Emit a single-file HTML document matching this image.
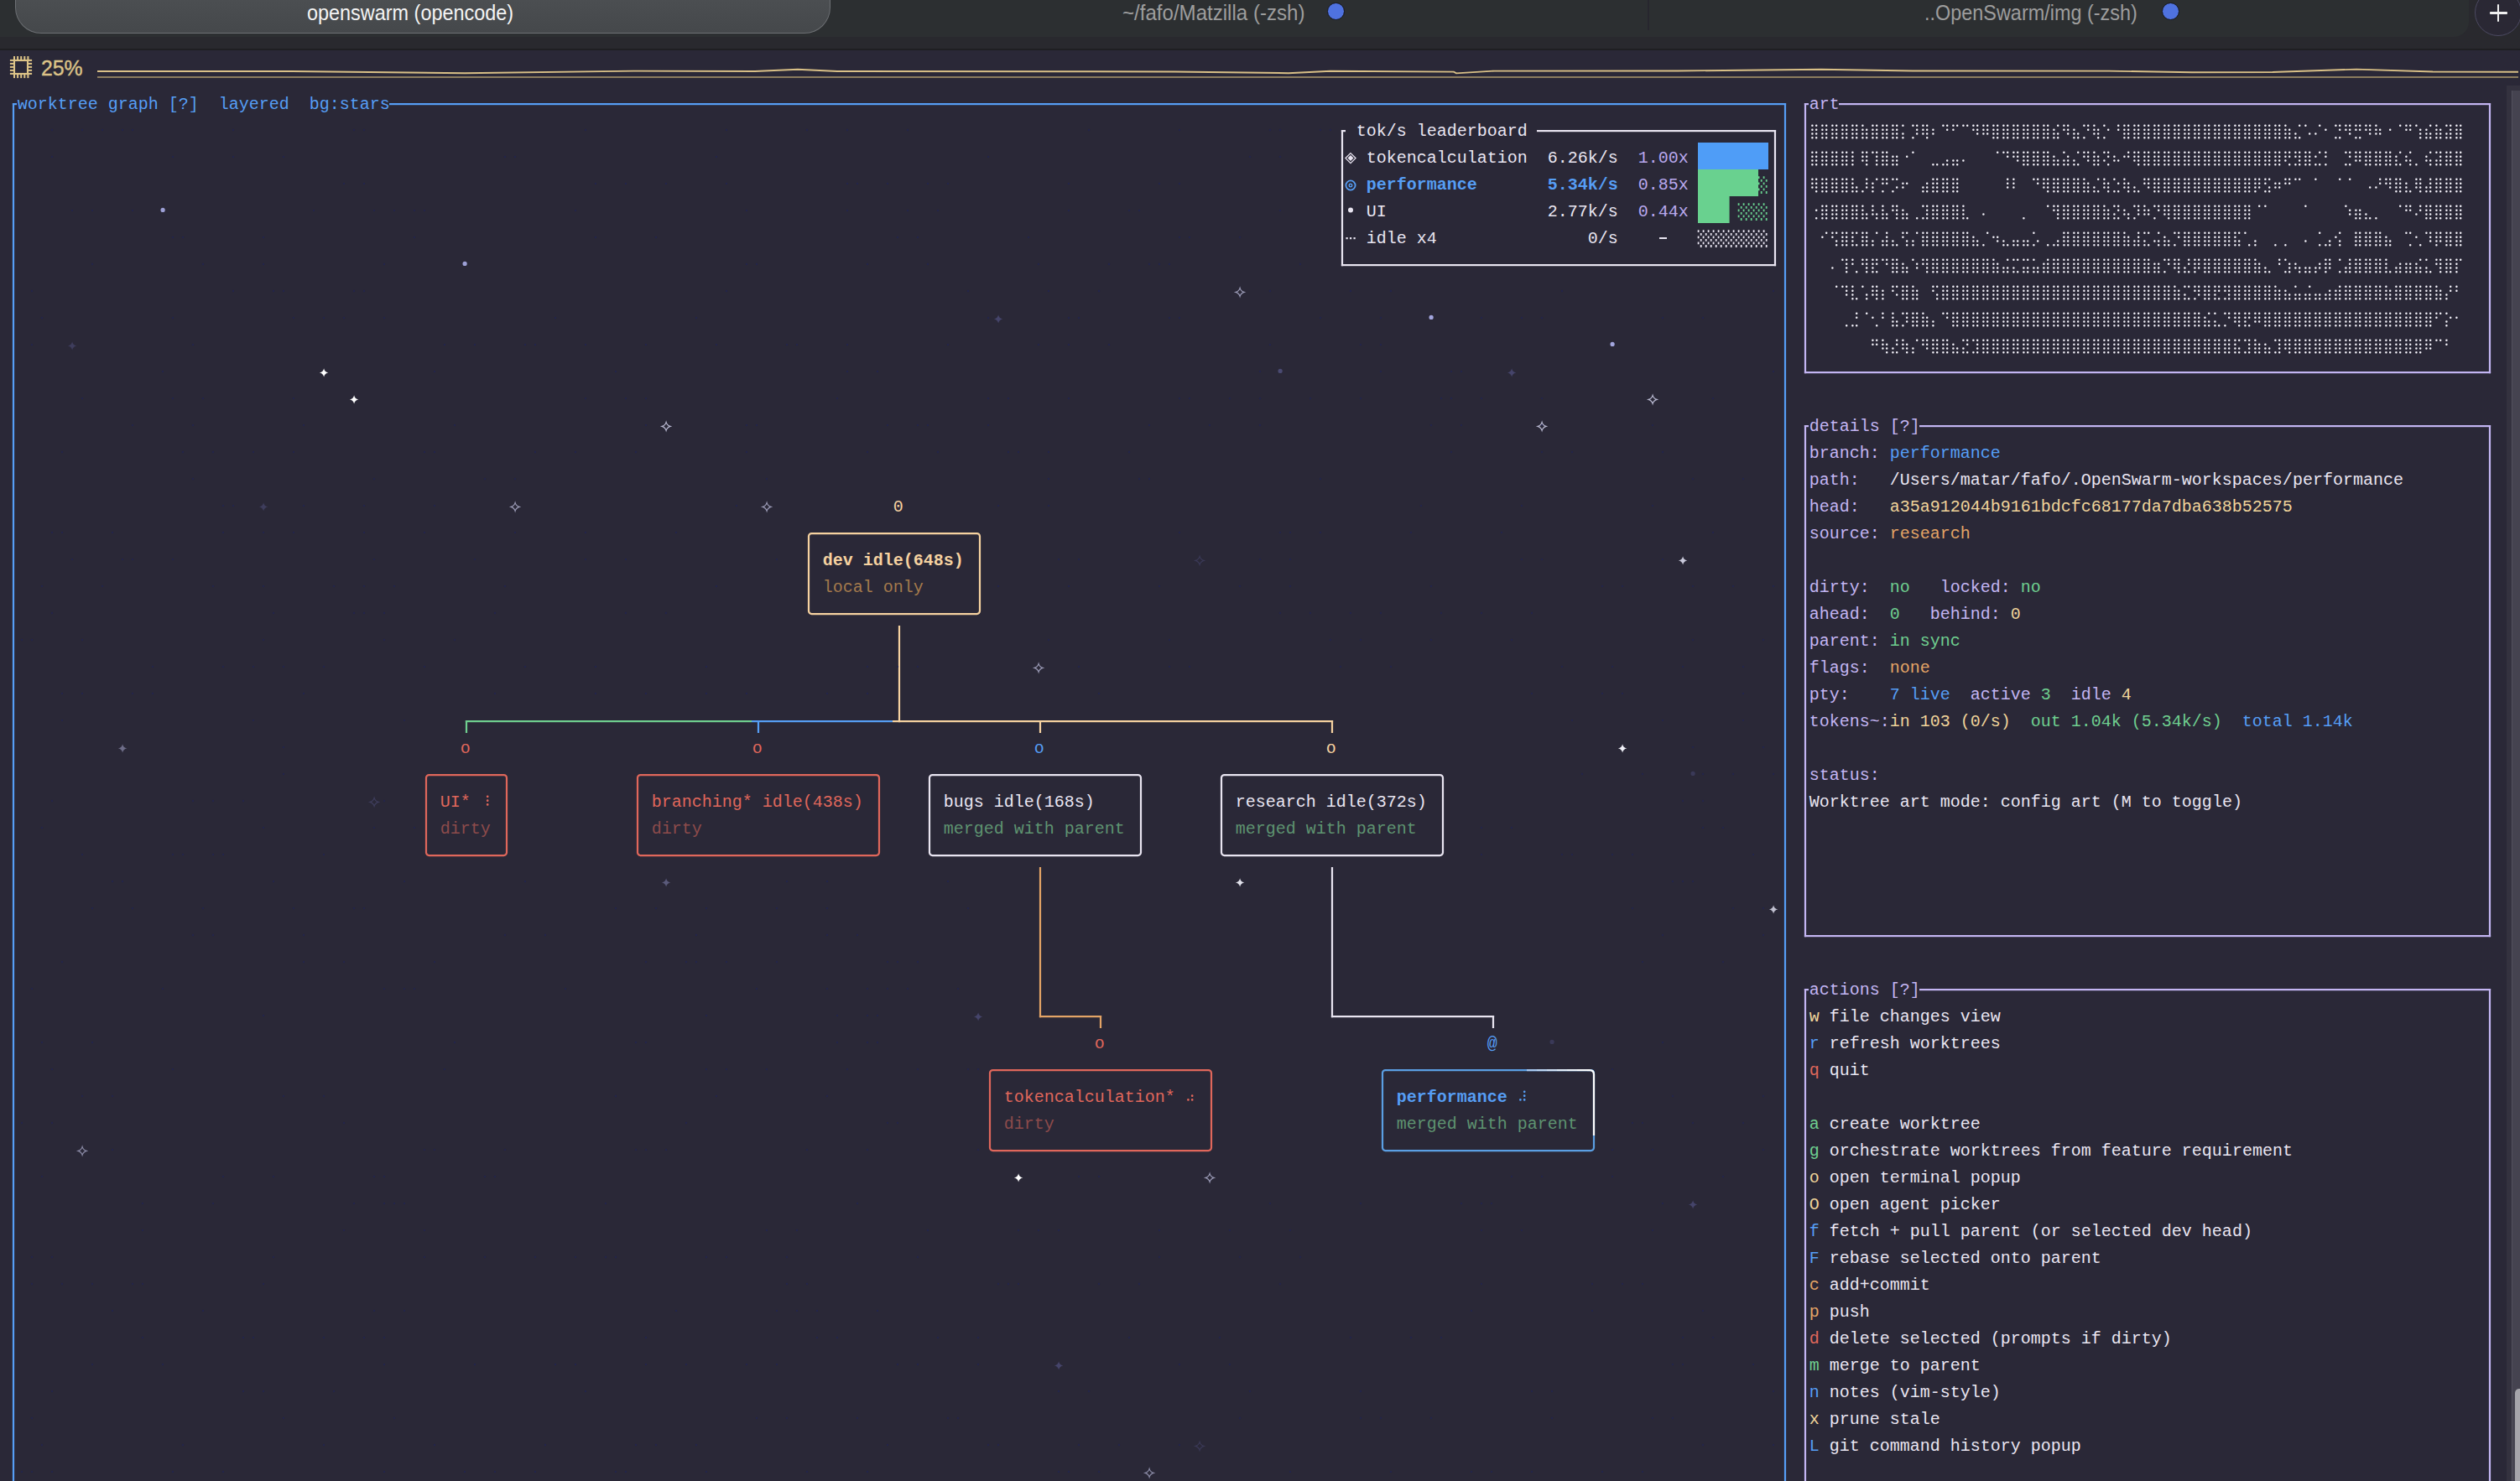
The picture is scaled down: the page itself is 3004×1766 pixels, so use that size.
<!DOCTYPE html>
<html><head><meta charset="utf-8"><style>
html,body{margin:0;padding:0}
body{width:3004px;height:1766px;overflow:hidden;position:relative;background:#2a2837;font-family:"Liberation Mono",monospace}
.t{position:absolute;white-space:pre;font-size:20px;line-height:32px;font-family:"Liberation Mono",monospace}
.tab{position:absolute;top:1.2px;height:40px;line-height:28px;font-family:"Liberation Sans",sans-serif;font-size:25px;white-space:pre;transform:scaleX(0.937);transform-origin:left}
</style></head><body>

<div style="position:absolute;left:0;top:0;width:3004px;height:58px;background:#29292e"></div>
<div style="position:absolute;left:0;top:0;width:2943px;height:43.5px;background:#2c2f31;border-radius:0 0 18px 0"></div>
<div style="position:absolute;left:0;top:58px;width:3004px;height:2px;background:#1f1f22"></div>
<div style="position:absolute;left:18px;top:-30px;width:972px;height:70px;border-radius:0 0 31px 31px;background:linear-gradient(#505356,#45484b);box-sizing:border-box;border:1.5px solid #6d7074;border-top:none"></div>
<div class="tab" style="left:366px;color:#f4f4f4">openswarm (opencode)</div>
<div style="position:absolute;left:1964px;top:0;width:2px;height:36px;background:#27262e"></div>
<div class="tab" style="left:1338px;color:#9d9d9d;transform:scaleX(0.963)">~/fafo/Matzilla (-zsh)</div>
<div style="position:absolute;left:1582px;top:3px;width:19px;height:19px;border-radius:50%;background:#4f72e0;border:1px solid #15151a"></div>
<div class="tab" style="left:2294px;color:#9d9d9d">..OpenSwarm/img (-zsh)</div>
<div style="position:absolute;left:2577px;top:3px;width:19px;height:19px;border-radius:50%;background:#4f72e0;border:1px solid #15151a"></div>
<div style="position:absolute;left:2950px;top:-13px;width:56px;height:56px;border-radius:50%;box-sizing:border-box;border:1.5px solid #4c4a62;background:#2a2834"></div>
<div style="position:absolute;left:2967.8px;top:14.4px;width:21px;height:2.2px;border-radius:1px;background:#f0f0f0"></div>
<div style="position:absolute;left:2977.2px;top:5px;width:2.2px;height:21px;border-radius:1px;background:#f0f0f0"></div>
<div style="position:absolute;left:49px;top:63.3px;font-family:'Liberation Sans',sans-serif;font-size:25px;line-height:36px;color:#dcc387;-webkit-text-stroke:0.4px #dcc387;transform:scaleX(0.99);transform-origin:left">25%</div>
<svg style="position:absolute;left:0;top:0" width="3004" height="106"><rect x="17" y="72" width="16" height="16" fill="none" stroke="#dcc387" stroke-width="2.1"/><rect x="16.0" y="67" width="2" height="4.5" fill="#dcc387"/><rect x="16.0" y="88.6" width="2" height="4.5" fill="#dcc387"/><rect x="11.9" y="70.9" width="4.5" height="2" fill="#dcc387"/><rect x="33.6" y="70.9" width="4.5" height="2" fill="#dcc387"/><rect x="20.1" y="67" width="2" height="4.5" fill="#dcc387"/><rect x="20.1" y="88.6" width="2" height="4.5" fill="#dcc387"/><rect x="11.9" y="74.9" width="4.5" height="2" fill="#dcc387"/><rect x="33.6" y="74.9" width="4.5" height="2" fill="#dcc387"/><rect x="24.2" y="67" width="2" height="4.5" fill="#dcc387"/><rect x="24.2" y="88.6" width="2" height="4.5" fill="#dcc387"/><rect x="11.9" y="78.9" width="4.5" height="2" fill="#dcc387"/><rect x="33.6" y="78.9" width="4.5" height="2" fill="#dcc387"/><rect x="28.3" y="67" width="2" height="4.5" fill="#dcc387"/><rect x="28.3" y="88.6" width="2" height="4.5" fill="#dcc387"/><rect x="11.9" y="82.9" width="4.5" height="2" fill="#dcc387"/><rect x="33.6" y="82.9" width="4.5" height="2" fill="#dcc387"/><rect x="32.4" y="67" width="2" height="4.5" fill="#dcc387"/><rect x="32.4" y="88.6" width="2" height="4.5" fill="#dcc387"/><rect x="11.9" y="86.9" width="4.5" height="2" fill="#dcc387"/><rect x="33.6" y="86.9" width="4.5" height="2" fill="#dcc387"/>
<path d="M116 85 L348 85 L554 87.2 L755 84.6 L900 85 L951 82.8 L998 85 L1300 85.2 L1400 85.5 L1536 87.2 L1586 84.8 L1733 85.6 L1736 87.4 L1781 84.6 L2000 84.5 L2171 82.8 L2280 84.5 L2514 84.6 L2613 86.3 L2709 86 L2809 82.6 L2900 85.5 L3002 85.7" fill="none" stroke="#d9c087" stroke-width="1.9"/>
<rect x="116" y="91.1" width="2886" height="1.8" fill="#968563"/>
</svg>
<div style="position:absolute;left:2988px;top:102px;width:16px;height:1664px;background:#34323f"></div>
<div style="position:absolute;left:2994px;top:108px;width:10px;height:1658px;background:#454350;border-left:1px solid #53515e;box-sizing:border-box"></div>
<div style="position:absolute;left:2997.5px;top:1656px;width:7px;height:110px;background:#a6a5ab;border-radius:5px 0 0 0"></div>

<svg style="position:absolute;left:0;top:0" width="3004" height="1766"><defs>
<pattern id="shG" width="4" height="4" patternUnits="userSpaceOnUse"><rect x="0" y="0" width="1.6" height="1.6" fill="#69d18f"/><rect x="2" y="2" width="1.6" height="1.6" fill="#69d18f"/></pattern>
<pattern id="shW" width="4" height="4" patternUnits="userSpaceOnUse"><rect x="0" y="0" width="1.6" height="1.6" fill="#e9e5f1"/><rect x="2" y="2" width="1.6" height="1.6" fill="#e9e5f1"/></pattern>
</defs>
<rect x="14.90" y="123.00" width="5.10" height="2.2" fill="#569ef5"/><rect x="464.00" y="123.00" width="1665.10" height="2.2" fill="#569ef5"/><rect x="14.90" y="123.00" width="2.2" height="1666.20" fill="#569ef5"/><rect x="2126.90" y="123.00" width="2.2" height="1666.20" fill="#569ef5"/><rect x="1598.90" y="155.00" width="5.10" height="2.2" fill="#e9e5f1"/><rect x="1832.00" y="155.00" width="285.10" height="2.2" fill="#e9e5f1"/><rect x="1598.90" y="155.00" width="2.2" height="162.20" fill="#e9e5f1"/><rect x="2114.90" y="155.00" width="2.2" height="162.20" fill="#e9e5f1"/><rect x="1598.90" y="315.00" width="518.20" height="2.2" fill="#e9e5f1"/><rect x="1978" y="283" width="9" height="2" fill="#e9e5f1"/><path d="M1610 182.6 l6 6 l-6 6 l-6 -6 z" fill="none" stroke="#e9e5f1" stroke-width="1.3"/><path d="M1610 185.1 l3.5 3.5 l-3.5 3.5 l-3.5 -3.5 z" fill="#e9e5f1"/><circle cx="1610" cy="221" r="5.6" fill="none" stroke="#569ef5" stroke-width="1.8"/><circle cx="1610" cy="221" r="1.8" fill="none" stroke="#569ef5" stroke-width="1.4"/><circle cx="1610" cy="250.5" r="3" fill="#e9e5f1"/><rect x="1604.5" y="283" width="2.2" height="2.2" fill="#e9e5f1"/><rect x="1609" y="283" width="2.2" height="2.2" fill="#e9e5f1"/><rect x="1613.5" y="283" width="2.2" height="2.2" fill="#e9e5f1"/><rect x="2024" y="170" width="84" height="32" fill="#4f9df7"/><rect x="2024" y="202" width="72" height="32" fill="#69d18f"/><rect x="2024" y="234" width="37.6" height="32" fill="#69d18f"/><path d="M2095.7 210.3h1.8v2.8h-1.8zM2098.8 213.9h1.8v2.8h-1.8zM2095.7 217.4h1.8v2.8h-1.8zM2098.8 221.0h1.8v2.8h-1.8zM2095.7 224.5h1.8v2.8h-1.8zM2098.8 228.1h1.8v2.8h-1.8zM2101.7 210.3h1.8v2.8h-1.8zM2104.8 213.9h1.8v2.8h-1.8zM2101.7 217.4h1.8v2.8h-1.8zM2104.8 221.0h1.8v2.8h-1.8zM2101.7 224.5h1.8v2.8h-1.8zM2104.8 228.1h1.8v2.8h-1.8z" fill="#69d18f"/><path d="M2071.7 242.3h1.8v2.8h-1.8zM2074.8 245.9h1.8v2.8h-1.8zM2071.7 249.4h1.8v2.8h-1.8zM2074.8 253.0h1.8v2.8h-1.8zM2071.7 256.5h1.8v2.8h-1.8zM2074.8 260.1h1.8v2.8h-1.8zM2077.7 242.3h1.8v2.8h-1.8zM2080.8 245.9h1.8v2.8h-1.8zM2077.7 249.4h1.8v2.8h-1.8zM2080.8 253.0h1.8v2.8h-1.8zM2077.7 256.5h1.8v2.8h-1.8zM2080.8 260.1h1.8v2.8h-1.8zM2083.7 242.3h1.8v2.8h-1.8zM2086.8 245.9h1.8v2.8h-1.8zM2083.7 249.4h1.8v2.8h-1.8zM2086.8 253.0h1.8v2.8h-1.8zM2083.7 256.5h1.8v2.8h-1.8zM2086.8 260.1h1.8v2.8h-1.8zM2089.7 242.3h1.8v2.8h-1.8zM2092.8 245.9h1.8v2.8h-1.8zM2089.7 249.4h1.8v2.8h-1.8zM2092.8 253.0h1.8v2.8h-1.8zM2089.7 256.5h1.8v2.8h-1.8zM2092.8 260.1h1.8v2.8h-1.8zM2095.7 242.3h1.8v2.8h-1.8zM2098.8 245.9h1.8v2.8h-1.8zM2095.7 249.4h1.8v2.8h-1.8zM2098.8 253.0h1.8v2.8h-1.8zM2095.7 256.5h1.8v2.8h-1.8zM2098.8 260.1h1.8v2.8h-1.8zM2101.7 242.3h1.8v2.8h-1.8zM2104.8 245.9h1.8v2.8h-1.8zM2101.7 249.4h1.8v2.8h-1.8zM2104.8 253.0h1.8v2.8h-1.8zM2101.7 256.5h1.8v2.8h-1.8zM2104.8 260.1h1.8v2.8h-1.8z" fill="#69d18f"/><path d="M2023.7 274.3h1.8v2.8h-1.8zM2026.8 277.9h1.8v2.8h-1.8zM2023.7 281.4h1.8v2.8h-1.8zM2026.8 285.0h1.8v2.8h-1.8zM2023.7 288.5h1.8v2.8h-1.8zM2026.8 292.1h1.8v2.8h-1.8zM2029.7 274.3h1.8v2.8h-1.8zM2032.8 277.9h1.8v2.8h-1.8zM2029.7 281.4h1.8v2.8h-1.8zM2032.8 285.0h1.8v2.8h-1.8zM2029.7 288.5h1.8v2.8h-1.8zM2032.8 292.1h1.8v2.8h-1.8zM2035.7 274.3h1.8v2.8h-1.8zM2038.8 277.9h1.8v2.8h-1.8zM2035.7 281.4h1.8v2.8h-1.8zM2038.8 285.0h1.8v2.8h-1.8zM2035.7 288.5h1.8v2.8h-1.8zM2038.8 292.1h1.8v2.8h-1.8zM2041.7 274.3h1.8v2.8h-1.8zM2044.8 277.9h1.8v2.8h-1.8zM2041.7 281.4h1.8v2.8h-1.8zM2044.8 285.0h1.8v2.8h-1.8zM2041.7 288.5h1.8v2.8h-1.8zM2044.8 292.1h1.8v2.8h-1.8zM2047.7 274.3h1.8v2.8h-1.8zM2050.8 277.9h1.8v2.8h-1.8zM2047.7 281.4h1.8v2.8h-1.8zM2050.8 285.0h1.8v2.8h-1.8zM2047.7 288.5h1.8v2.8h-1.8zM2050.8 292.1h1.8v2.8h-1.8zM2053.7 274.3h1.8v2.8h-1.8zM2056.8 277.9h1.8v2.8h-1.8zM2053.7 281.4h1.8v2.8h-1.8zM2056.8 285.0h1.8v2.8h-1.8zM2053.7 288.5h1.8v2.8h-1.8zM2056.8 292.1h1.8v2.8h-1.8zM2059.7 274.3h1.8v2.8h-1.8zM2062.8 277.9h1.8v2.8h-1.8zM2059.7 281.4h1.8v2.8h-1.8zM2062.8 285.0h1.8v2.8h-1.8zM2059.7 288.5h1.8v2.8h-1.8zM2062.8 292.1h1.8v2.8h-1.8zM2065.7 274.3h1.8v2.8h-1.8zM2068.8 277.9h1.8v2.8h-1.8zM2065.7 281.4h1.8v2.8h-1.8zM2068.8 285.0h1.8v2.8h-1.8zM2065.7 288.5h1.8v2.8h-1.8zM2068.8 292.1h1.8v2.8h-1.8zM2071.7 274.3h1.8v2.8h-1.8zM2074.8 277.9h1.8v2.8h-1.8zM2071.7 281.4h1.8v2.8h-1.8zM2074.8 285.0h1.8v2.8h-1.8zM2071.7 288.5h1.8v2.8h-1.8zM2074.8 292.1h1.8v2.8h-1.8zM2077.7 274.3h1.8v2.8h-1.8zM2080.8 277.9h1.8v2.8h-1.8zM2077.7 281.4h1.8v2.8h-1.8zM2080.8 285.0h1.8v2.8h-1.8zM2077.7 288.5h1.8v2.8h-1.8zM2080.8 292.1h1.8v2.8h-1.8zM2083.7 274.3h1.8v2.8h-1.8zM2086.8 277.9h1.8v2.8h-1.8zM2083.7 281.4h1.8v2.8h-1.8zM2086.8 285.0h1.8v2.8h-1.8zM2083.7 288.5h1.8v2.8h-1.8zM2086.8 292.1h1.8v2.8h-1.8zM2089.7 274.3h1.8v2.8h-1.8zM2092.8 277.9h1.8v2.8h-1.8zM2089.7 281.4h1.8v2.8h-1.8zM2092.8 285.0h1.8v2.8h-1.8zM2089.7 288.5h1.8v2.8h-1.8zM2092.8 292.1h1.8v2.8h-1.8zM2095.7 274.3h1.8v2.8h-1.8zM2098.8 277.9h1.8v2.8h-1.8zM2095.7 281.4h1.8v2.8h-1.8zM2098.8 285.0h1.8v2.8h-1.8zM2095.7 288.5h1.8v2.8h-1.8zM2098.8 292.1h1.8v2.8h-1.8zM2101.7 274.3h1.8v2.8h-1.8zM2104.8 277.9h1.8v2.8h-1.8zM2101.7 281.4h1.8v2.8h-1.8zM2104.8 285.0h1.8v2.8h-1.8zM2101.7 288.5h1.8v2.8h-1.8zM2104.8 292.1h1.8v2.8h-1.8z" fill="#e9e5f1"/><rect x="964.00" y="636.10" width="204.00" height="96.00" rx="3.5" ry="3.5" fill="none" stroke="#f6d2a0" stroke-width="2.2"/><rect x="1070.90" y="746.00" width="2.2" height="115.20" fill="#f6d2a0"/><rect x="554.90" y="859.00" width="341.10" height="2.2" fill="#6fcf8f"/><rect x="896.00" y="859.00" width="168.00" height="2.2" fill="#569ef5"/><rect x="1064.00" y="859.00" width="525.10" height="2.2" fill="#f6d2a0"/><rect x="554.90" y="859.00" width="2.2" height="15.00" fill="#6fcf8f"/><rect x="902.90" y="859.00" width="2.2" height="15.00" fill="#569ef5"/><rect x="1238.90" y="859.00" width="2.2" height="15.00" fill="#f6d2a0"/><rect x="1586.90" y="859.00" width="2.2" height="15.00" fill="#f6d2a0"/><rect x="508.00" y="924.10" width="96.00" height="96.00" rx="3.5" ry="3.5" fill="none" stroke="#e0675b" stroke-width="2.2"/><rect x="760.00" y="924.10" width="288.00" height="96.00" rx="3.5" ry="3.5" fill="none" stroke="#e0675b" stroke-width="2.2"/><rect x="1108.00" y="924.10" width="252.00" height="96.00" rx="3.5" ry="3.5" fill="none" stroke="#e9e5f1" stroke-width="2.2"/><rect x="1456.00" y="924.10" width="264.00" height="96.00" rx="3.5" ry="3.5" fill="none" stroke="#e9e5f1" stroke-width="2.2"/><rect x="1238.90" y="1034.00" width="2.2" height="179.20" fill="#e3a466"/><rect x="1238.90" y="1211.00" width="74.20" height="2.2" fill="#e3a466"/><rect x="1310.90" y="1211.00" width="2.2" height="15.00" fill="#e3a466"/><rect x="1180.00" y="1276.10" width="264.00" height="96.00" rx="3.5" ry="3.5" fill="none" stroke="#e0675b" stroke-width="2.2"/><rect x="1586.90" y="1034.00" width="2.2" height="179.20" fill="#e9e5f1"/><rect x="1586.90" y="1211.00" width="194.20" height="2.2" fill="#e9e5f1"/><rect x="1778.90" y="1211.00" width="2.2" height="15.00" fill="#e9e5f1"/><rect x="1648.00" y="1276.10" width="252.00" height="96.00" rx="3.5" ry="3.5" fill="none" stroke="#5b9fe3" stroke-width="2.2"/><rect x="1820" y="1275.0" width="12" height="2.2" fill="#a9c9f1"/><rect x="1832" y="1275.0" width="12" height="2.2" fill="#bcd6f4"/><rect x="1844" y="1275.0" width="12" height="2.2" fill="#d0e2f7"/><rect x="1856" y="1275.0" width="12" height="2.2" fill="#e2eefa"/><rect x="1868" y="1275.0" width="12" height="2.2" fill="#eff6fd"/><rect x="1880" y="1275.0" width="12" height="2.2" fill="#fafcff"/><path d="M1892 1276.1 H1895.0 Q1900.0 1276.1 1900.0 1281.1 V1354" fill="none" stroke="#ffffff" stroke-width="2.2"/><path d="M581.2 949.8h0M581.2 954.7h0M581.2 959.4h0" stroke="#e0675b" stroke-width="2.7" stroke-linecap="round" fill="none"/><path d="M1421.2 1306.7h0M1416.4 1311.4h0M1421.2 1311.4h0" stroke="#e0675b" stroke-width="2.7" stroke-linecap="round" fill="none"/><path d="M1817.2 1301.8h0M1817.2 1306.7h0M1817.2 1311.4h0M1812.4 1311.4h0" stroke="#569ef5" stroke-width="2.7" stroke-linecap="round" fill="none"/><rect x="2150.90" y="123.00" width="5.10" height="2.2" fill="#c3b5f2"/><rect x="2192.00" y="123.00" width="777.10" height="2.2" fill="#c3b5f2"/><rect x="2150.90" y="123.00" width="2.2" height="322.20" fill="#c3b5f2"/><rect x="2966.90" y="123.00" width="2.2" height="322.20" fill="#c3b5f2"/><rect x="2150.90" y="443.00" width="818.20" height="2.2" fill="#c3b5f2"/><rect x="2150.90" y="507.00" width="5.10" height="2.2" fill="#c3b5f2"/><rect x="2288.00" y="507.00" width="681.10" height="2.2" fill="#c3b5f2"/><rect x="2150.90" y="507.00" width="2.2" height="610.20" fill="#c3b5f2"/><rect x="2966.90" y="507.00" width="2.2" height="610.20" fill="#c3b5f2"/><rect x="2150.90" y="1115.00" width="818.20" height="2.2" fill="#c3b5f2"/><rect x="2150.90" y="1179.00" width="5.10" height="2.2" fill="#c3b5f2"/><rect x="2288.00" y="1179.00" width="681.10" height="2.2" fill="#c3b5f2"/><rect x="2150.90" y="1179.00" width="2.2" height="642.20" fill="#c3b5f2"/><rect x="2966.90" y="1179.00" width="2.2" height="642.20" fill="#c3b5f2"/><rect x="2150.90" y="1819.00" width="818.20" height="2.2" fill="#c3b5f2"/><path d="M2160.4 149.8h0M2165.2 149.8h0M2172.4 149.8h0M2177.2 149.8h0M2184.4 149.8h0M2189.2 149.8h0M2196.4 149.8h0M2201.2 149.8h0M2208.4 149.8h0M2213.2 149.8h0M2220.4 149.8h0M2232.4 149.8h0M2237.2 149.8h0M2244.4 149.8h0M2249.2 149.8h0M2256.4 149.8h0M2261.2 149.8h0M2268.4 149.8h0M2280.4 149.8h0M2285.2 149.8h0M2292.4 149.8h0M2297.2 149.8h0M2316.4 149.8h0M2321.2 149.8h0M2328.4 149.8h0M2333.2 149.8h0M2340.4 149.8h0M2345.2 149.8h0M2352.4 149.8h0M2357.2 149.8h0M2364.4 149.8h0M2369.2 149.8h0M2376.4 149.8h0M2381.2 149.8h0M2388.4 149.8h0M2393.2 149.8h0M2400.4 149.8h0M2405.2 149.8h0M2412.4 149.8h0M2417.2 149.8h0M2424.4 149.8h0M2429.2 149.8h0M2436.4 149.8h0M2441.2 149.8h0M2453.2 149.8h0M2460.4 149.8h0M2465.2 149.8h0M2484.4 149.8h0M2489.2 149.8h0M2496.4 149.8h0M2508.4 149.8h0M2525.2 149.8h0M2532.4 149.8h0M2537.2 149.8h0M2544.4 149.8h0M2549.2 149.8h0M2556.4 149.8h0M2561.2 149.8h0M2568.4 149.8h0M2573.2 149.8h0M2580.4 149.8h0M2585.2 149.8h0M2592.4 149.8h0M2597.2 149.8h0M2604.4 149.8h0M2609.2 149.8h0M2616.4 149.8h0M2621.2 149.8h0M2628.4 149.8h0M2633.2 149.8h0M2640.4 149.8h0M2645.2 149.8h0M2652.4 149.8h0M2657.2 149.8h0M2664.4 149.8h0M2669.2 149.8h0M2676.4 149.8h0M2681.2 149.8h0M2688.4 149.8h0M2693.2 149.8h0M2700.4 149.8h0M2705.2 149.8h0M2712.4 149.8h0M2717.2 149.8h0M2724.4 149.8h0M2741.2 149.8h0M2748.4 149.8h0M2765.2 149.8h0M2784.4 149.8h0M2789.2 149.8h0M2796.4 149.8h0M2801.2 149.8h0M2808.4 149.8h0M2813.2 149.8h0M2820.4 149.8h0M2825.2 149.8h0M2832.4 149.8h0M2861.2 149.8h0M2868.4 149.8h0M2873.2 149.8h0M2880.4 149.8h0M2897.2 149.8h0M2904.4 149.8h0M2916.4 149.8h0M2921.2 149.8h0M2928.4 149.8h0M2933.2 149.8h0M2160.4 154.7h0M2165.2 154.7h0M2172.4 154.7h0M2177.2 154.7h0M2184.4 154.7h0M2189.2 154.7h0M2196.4 154.7h0M2201.2 154.7h0M2208.4 154.7h0M2213.2 154.7h0M2220.4 154.7h0M2225.2 154.7h0M2232.4 154.7h0M2237.2 154.7h0M2244.4 154.7h0M2249.2 154.7h0M2256.4 154.7h0M2261.2 154.7h0M2285.2 154.7h0M2292.4 154.7h0M2297.2 154.7h0M2304.4 154.7h0M2321.2 154.7h0M2328.4 154.7h0M2352.4 154.7h0M2357.2 154.7h0M2364.4 154.7h0M2369.2 154.7h0M2376.4 154.7h0M2381.2 154.7h0M2388.4 154.7h0M2393.2 154.7h0M2400.4 154.7h0M2405.2 154.7h0M2412.4 154.7h0M2417.2 154.7h0M2424.4 154.7h0M2429.2 154.7h0M2436.4 154.7h0M2441.2 154.7h0M2448.4 154.7h0M2460.4 154.7h0M2465.2 154.7h0M2472.4 154.7h0M2489.2 154.7h0M2496.4 154.7h0M2501.2 154.7h0M2513.2 154.7h0M2525.2 154.7h0M2532.4 154.7h0M2537.2 154.7h0M2544.4 154.7h0M2549.2 154.7h0M2556.4 154.7h0M2561.2 154.7h0M2568.4 154.7h0M2573.2 154.7h0M2580.4 154.7h0M2585.2 154.7h0M2592.4 154.7h0M2597.2 154.7h0M2604.4 154.7h0M2609.2 154.7h0M2616.4 154.7h0M2621.2 154.7h0M2628.4 154.7h0M2633.2 154.7h0M2640.4 154.7h0M2645.2 154.7h0M2652.4 154.7h0M2657.2 154.7h0M2664.4 154.7h0M2669.2 154.7h0M2676.4 154.7h0M2681.2 154.7h0M2688.4 154.7h0M2693.2 154.7h0M2700.4 154.7h0M2705.2 154.7h0M2712.4 154.7h0M2717.2 154.7h0M2724.4 154.7h0M2729.2 154.7h0M2772.4 154.7h0M2789.2 154.7h0M2796.4 154.7h0M2801.2 154.7h0M2808.4 154.7h0M2813.2 154.7h0M2820.4 154.7h0M2825.2 154.7h0M2832.4 154.7h0M2837.2 154.7h0M2849.2 154.7h0M2868.4 154.7h0M2873.2 154.7h0M2885.2 154.7h0M2892.4 154.7h0M2904.4 154.7h0M2909.2 154.7h0M2921.2 154.7h0M2928.4 154.7h0M2933.2 154.7h0M2160.4 159.4h0M2165.2 159.4h0M2172.4 159.4h0M2177.2 159.4h0M2184.4 159.4h0M2189.2 159.4h0M2196.4 159.4h0M2201.2 159.4h0M2208.4 159.4h0M2213.2 159.4h0M2220.4 159.4h0M2225.2 159.4h0M2232.4 159.4h0M2237.2 159.4h0M2244.4 159.4h0M2249.2 159.4h0M2256.4 159.4h0M2261.2 159.4h0M2268.4 159.4h0M2285.2 159.4h0M2292.4 159.4h0M2297.2 159.4h0M2304.4 159.4h0M2357.2 159.4h0M2364.4 159.4h0M2369.2 159.4h0M2376.4 159.4h0M2381.2 159.4h0M2388.4 159.4h0M2393.2 159.4h0M2400.4 159.4h0M2405.2 159.4h0M2412.4 159.4h0M2417.2 159.4h0M2424.4 159.4h0M2429.2 159.4h0M2436.4 159.4h0M2441.2 159.4h0M2448.4 159.4h0M2453.2 159.4h0M2465.2 159.4h0M2472.4 159.4h0M2477.2 159.4h0M2496.4 159.4h0M2501.2 159.4h0M2532.4 159.4h0M2537.2 159.4h0M2544.4 159.4h0M2549.2 159.4h0M2556.4 159.4h0M2561.2 159.4h0M2568.4 159.4h0M2573.2 159.4h0M2580.4 159.4h0M2585.2 159.4h0M2592.4 159.4h0M2597.2 159.4h0M2604.4 159.4h0M2609.2 159.4h0M2616.4 159.4h0M2621.2 159.4h0M2628.4 159.4h0M2633.2 159.4h0M2640.4 159.4h0M2645.2 159.4h0M2652.4 159.4h0M2657.2 159.4h0M2664.4 159.4h0M2669.2 159.4h0M2676.4 159.4h0M2681.2 159.4h0M2688.4 159.4h0M2693.2 159.4h0M2700.4 159.4h0M2705.2 159.4h0M2712.4 159.4h0M2717.2 159.4h0M2724.4 159.4h0M2729.2 159.4h0M2736.4 159.4h0M2753.2 159.4h0M2760.4 159.4h0M2801.2 159.4h0M2825.2 159.4h0M2832.4 159.4h0M2837.2 159.4h0M2885.2 159.4h0M2892.4 159.4h0M2897.2 159.4h0M2904.4 159.4h0M2909.2 159.4h0M2916.4 159.4h0M2921.2 159.4h0M2928.4 159.4h0M2933.2 159.4h0M2160.4 164.3h0M2165.2 164.3h0M2172.4 164.3h0M2177.2 164.3h0M2184.4 164.3h0M2189.2 164.3h0M2196.4 164.3h0M2201.2 164.3h0M2208.4 164.3h0M2213.2 164.3h0M2220.4 164.3h0M2225.2 164.3h0M2232.4 164.3h0M2237.2 164.3h0M2244.4 164.3h0M2249.2 164.3h0M2256.4 164.3h0M2261.2 164.3h0M2268.4 164.3h0M2280.4 164.3h0M2297.2 164.3h0M2376.4 164.3h0M2381.2 164.3h0M2388.4 164.3h0M2393.2 164.3h0M2400.4 164.3h0M2405.2 164.3h0M2412.4 164.3h0M2417.2 164.3h0M2424.4 164.3h0M2429.2 164.3h0M2436.4 164.3h0M2441.2 164.3h0M2448.4 164.3h0M2453.2 164.3h0M2472.4 164.3h0M2477.2 164.3h0M2484.4 164.3h0M2501.2 164.3h0M2508.4 164.3h0M2532.4 164.3h0M2537.2 164.3h0M2544.4 164.3h0M2549.2 164.3h0M2556.4 164.3h0M2561.2 164.3h0M2568.4 164.3h0M2573.2 164.3h0M2580.4 164.3h0M2585.2 164.3h0M2592.4 164.3h0M2597.2 164.3h0M2604.4 164.3h0M2609.2 164.3h0M2616.4 164.3h0M2621.2 164.3h0M2628.4 164.3h0M2633.2 164.3h0M2640.4 164.3h0M2645.2 164.3h0M2652.4 164.3h0M2657.2 164.3h0M2664.4 164.3h0M2669.2 164.3h0M2676.4 164.3h0M2681.2 164.3h0M2688.4 164.3h0M2693.2 164.3h0M2700.4 164.3h0M2705.2 164.3h0M2712.4 164.3h0M2717.2 164.3h0M2724.4 164.3h0M2729.2 164.3h0M2736.4 164.3h0M2741.2 164.3h0M2784.4 164.3h0M2789.2 164.3h0M2808.4 164.3h0M2813.2 164.3h0M2885.2 164.3h0M2892.4 164.3h0M2897.2 164.3h0M2904.4 164.3h0M2909.2 164.3h0M2916.4 164.3h0M2921.2 164.3h0M2928.4 164.3h0M2933.2 164.3h0M2160.4 181.8h0M2165.2 181.8h0M2172.4 181.8h0M2177.2 181.8h0M2184.4 181.8h0M2189.2 181.8h0M2196.4 181.8h0M2201.2 181.8h0M2208.4 181.8h0M2220.4 181.8h0M2225.2 181.8h0M2232.4 181.8h0M2237.2 181.8h0M2244.4 181.8h0M2249.2 181.8h0M2280.4 181.8h0M2381.2 181.8h0M2388.4 181.8h0M2393.2 181.8h0M2400.4 181.8h0M2405.2 181.8h0M2412.4 181.8h0M2417.2 181.8h0M2424.4 181.8h0M2429.2 181.8h0M2436.4 181.8h0M2441.2 181.8h0M2460.4 181.8h0M2477.2 181.8h0M2484.4 181.8h0M2489.2 181.8h0M2496.4 181.8h0M2508.4 181.8h0M2513.2 181.8h0M2537.2 181.8h0M2544.4 181.8h0M2549.2 181.8h0M2556.4 181.8h0M2561.2 181.8h0M2568.4 181.8h0M2573.2 181.8h0M2580.4 181.8h0M2585.2 181.8h0M2592.4 181.8h0M2597.2 181.8h0M2604.4 181.8h0M2609.2 181.8h0M2616.4 181.8h0M2621.2 181.8h0M2628.4 181.8h0M2633.2 181.8h0M2640.4 181.8h0M2645.2 181.8h0M2652.4 181.8h0M2657.2 181.8h0M2664.4 181.8h0M2669.2 181.8h0M2676.4 181.8h0M2681.2 181.8h0M2688.4 181.8h0M2693.2 181.8h0M2700.4 181.8h0M2705.2 181.8h0M2712.4 181.8h0M2717.2 181.8h0M2724.4 181.8h0M2729.2 181.8h0M2736.4 181.8h0M2741.2 181.8h0M2748.4 181.8h0M2753.2 181.8h0M2765.2 181.8h0M2772.4 181.8h0M2796.4 181.8h0M2801.2 181.8h0M2808.4 181.8h0M2813.2 181.8h0M2820.4 181.8h0M2825.2 181.8h0M2832.4 181.8h0M2837.2 181.8h0M2844.4 181.8h0M2849.2 181.8h0M2861.2 181.8h0M2873.2 181.8h0M2897.2 181.8h0M2904.4 181.8h0M2909.2 181.8h0M2916.4 181.8h0M2921.2 181.8h0M2928.4 181.8h0M2933.2 181.8h0M2160.4 186.7h0M2165.2 186.7h0M2172.4 186.7h0M2177.2 186.7h0M2184.4 186.7h0M2189.2 186.7h0M2196.4 186.7h0M2201.2 186.7h0M2208.4 186.7h0M2220.4 186.7h0M2225.2 186.7h0M2237.2 186.7h0M2244.4 186.7h0M2249.2 186.7h0M2256.4 186.7h0M2261.2 186.7h0M2273.2 186.7h0M2393.2 186.7h0M2400.4 186.7h0M2405.2 186.7h0M2412.4 186.7h0M2417.2 186.7h0M2424.4 186.7h0M2429.2 186.7h0M2436.4 186.7h0M2441.2 186.7h0M2448.4 186.7h0M2465.2 186.7h0M2484.4 186.7h0M2489.2 186.7h0M2496.4 186.7h0M2501.2 186.7h0M2513.2 186.7h0M2520.4 186.7h0M2532.4 186.7h0M2537.2 186.7h0M2544.4 186.7h0M2549.2 186.7h0M2556.4 186.7h0M2561.2 186.7h0M2568.4 186.7h0M2573.2 186.7h0M2580.4 186.7h0M2585.2 186.7h0M2592.4 186.7h0M2597.2 186.7h0M2604.4 186.7h0M2609.2 186.7h0M2616.4 186.7h0M2621.2 186.7h0M2628.4 186.7h0M2633.2 186.7h0M2640.4 186.7h0M2645.2 186.7h0M2652.4 186.7h0M2657.2 186.7h0M2664.4 186.7h0M2669.2 186.7h0M2676.4 186.7h0M2681.2 186.7h0M2688.4 186.7h0M2693.2 186.7h0M2700.4 186.7h0M2705.2 186.7h0M2712.4 186.7h0M2717.2 186.7h0M2724.4 186.7h0M2729.2 186.7h0M2736.4 186.7h0M2741.2 186.7h0M2748.4 186.7h0M2753.2 186.7h0M2760.4 186.7h0M2772.4 186.7h0M2801.2 186.7h0M2808.4 186.7h0M2813.2 186.7h0M2820.4 186.7h0M2825.2 186.7h0M2832.4 186.7h0M2837.2 186.7h0M2844.4 186.7h0M2849.2 186.7h0M2856.4 186.7h0M2868.4 186.7h0M2892.4 186.7h0M2909.2 186.7h0M2916.4 186.7h0M2921.2 186.7h0M2928.4 186.7h0M2933.2 186.7h0M2160.4 191.4h0M2165.2 191.4h0M2172.4 191.4h0M2177.2 191.4h0M2184.4 191.4h0M2189.2 191.4h0M2196.4 191.4h0M2201.2 191.4h0M2208.4 191.4h0M2220.4 191.4h0M2225.2 191.4h0M2237.2 191.4h0M2244.4 191.4h0M2249.2 191.4h0M2256.4 191.4h0M2261.2 191.4h0M2321.2 191.4h0M2328.4 191.4h0M2333.2 191.4h0M2340.4 191.4h0M2405.2 191.4h0M2412.4 191.4h0M2417.2 191.4h0M2424.4 191.4h0M2429.2 191.4h0M2436.4 191.4h0M2441.2 191.4h0M2448.4 191.4h0M2453.2 191.4h0M2460.4 191.4h0M2465.2 191.4h0M2472.4 191.4h0M2489.2 191.4h0M2496.4 191.4h0M2501.2 191.4h0M2508.4 191.4h0M2520.4 191.4h0M2525.2 191.4h0M2544.4 191.4h0M2549.2 191.4h0M2556.4 191.4h0M2561.2 191.4h0M2568.4 191.4h0M2573.2 191.4h0M2580.4 191.4h0M2585.2 191.4h0M2592.4 191.4h0M2597.2 191.4h0M2604.4 191.4h0M2609.2 191.4h0M2616.4 191.4h0M2621.2 191.4h0M2628.4 191.4h0M2633.2 191.4h0M2640.4 191.4h0M2645.2 191.4h0M2652.4 191.4h0M2657.2 191.4h0M2664.4 191.4h0M2669.2 191.4h0M2676.4 191.4h0M2681.2 191.4h0M2688.4 191.4h0M2693.2 191.4h0M2700.4 191.4h0M2705.2 191.4h0M2712.4 191.4h0M2717.2 191.4h0M2724.4 191.4h0M2741.2 191.4h0M2748.4 191.4h0M2753.2 191.4h0M2808.4 191.4h0M2813.2 191.4h0M2820.4 191.4h0M2825.2 191.4h0M2832.4 191.4h0M2837.2 191.4h0M2844.4 191.4h0M2849.2 191.4h0M2856.4 191.4h0M2868.4 191.4h0M2873.2 191.4h0M2892.4 191.4h0M2897.2 191.4h0M2904.4 191.4h0M2909.2 191.4h0M2916.4 191.4h0M2921.2 191.4h0M2928.4 191.4h0M2933.2 191.4h0M2160.4 196.3h0M2165.2 196.3h0M2172.4 196.3h0M2177.2 196.3h0M2184.4 196.3h0M2189.2 196.3h0M2196.4 196.3h0M2201.2 196.3h0M2208.4 196.3h0M2225.2 196.3h0M2237.2 196.3h0M2244.4 196.3h0M2249.2 196.3h0M2256.4 196.3h0M2261.2 196.3h0M2304.4 196.3h0M2309.2 196.3h0M2316.4 196.3h0M2321.2 196.3h0M2328.4 196.3h0M2333.2 196.3h0M2412.4 196.3h0M2417.2 196.3h0M2424.4 196.3h0M2429.2 196.3h0M2436.4 196.3h0M2441.2 196.3h0M2448.4 196.3h0M2453.2 196.3h0M2460.4 196.3h0M2465.2 196.3h0M2472.4 196.3h0M2477.2 196.3h0M2496.4 196.3h0M2501.2 196.3h0M2513.2 196.3h0M2549.2 196.3h0M2556.4 196.3h0M2561.2 196.3h0M2568.4 196.3h0M2573.2 196.3h0M2580.4 196.3h0M2585.2 196.3h0M2592.4 196.3h0M2597.2 196.3h0M2604.4 196.3h0M2609.2 196.3h0M2616.4 196.3h0M2621.2 196.3h0M2628.4 196.3h0M2633.2 196.3h0M2640.4 196.3h0M2645.2 196.3h0M2652.4 196.3h0M2657.2 196.3h0M2664.4 196.3h0M2669.2 196.3h0M2676.4 196.3h0M2681.2 196.3h0M2688.4 196.3h0M2693.2 196.3h0M2700.4 196.3h0M2705.2 196.3h0M2712.4 196.3h0M2717.2 196.3h0M2729.2 196.3h0M2736.4 196.3h0M2741.2 196.3h0M2748.4 196.3h0M2753.2 196.3h0M2760.4 196.3h0M2765.2 196.3h0M2772.4 196.3h0M2796.4 196.3h0M2801.2 196.3h0M2820.4 196.3h0M2825.2 196.3h0M2832.4 196.3h0M2837.2 196.3h0M2844.4 196.3h0M2849.2 196.3h0M2856.4 196.3h0M2861.2 196.3h0M2873.2 196.3h0M2880.4 196.3h0M2897.2 196.3h0M2904.4 196.3h0M2909.2 196.3h0M2916.4 196.3h0M2921.2 196.3h0M2928.4 196.3h0M2933.2 196.3h0M2160.4 213.8h0M2165.2 213.8h0M2172.4 213.8h0M2177.2 213.8h0M2184.4 213.8h0M2189.2 213.8h0M2196.4 213.8h0M2201.2 213.8h0M2208.4 213.8h0M2225.2 213.8h0M2237.2 213.8h0M2244.4 213.8h0M2249.2 213.8h0M2256.4 213.8h0M2261.2 213.8h0M2304.4 213.8h0M2309.2 213.8h0M2316.4 213.8h0M2321.2 213.8h0M2328.4 213.8h0M2333.2 213.8h0M2393.2 213.8h0M2400.4 213.8h0M2424.4 213.8h0M2429.2 213.8h0M2436.4 213.8h0M2441.2 213.8h0M2448.4 213.8h0M2453.2 213.8h0M2460.4 213.8h0M2465.2 213.8h0M2472.4 213.8h0M2477.2 213.8h0M2484.4 213.8h0M2501.2 213.8h0M2508.4 213.8h0M2520.4 213.8h0M2532.4 213.8h0M2556.4 213.8h0M2561.2 213.8h0M2568.4 213.8h0M2573.2 213.8h0M2580.4 213.8h0M2585.2 213.8h0M2592.4 213.8h0M2597.2 213.8h0M2604.4 213.8h0M2609.2 213.8h0M2616.4 213.8h0M2621.2 213.8h0M2628.4 213.8h0M2633.2 213.8h0M2640.4 213.8h0M2645.2 213.8h0M2652.4 213.8h0M2657.2 213.8h0M2664.4 213.8h0M2669.2 213.8h0M2676.4 213.8h0M2681.2 213.8h0M2688.4 213.8h0M2693.2 213.8h0M2700.4 213.8h0M2705.2 213.8h0M2724.4 213.8h0M2729.2 213.8h0M2736.4 213.8h0M2741.2 213.8h0M2760.4 213.8h0M2789.2 213.8h0M2801.2 213.8h0M2837.2 213.8h0M2844.4 213.8h0M2849.2 213.8h0M2856.4 213.8h0M2861.2 213.8h0M2880.4 213.8h0M2885.2 213.8h0M2897.2 213.8h0M2904.4 213.8h0M2909.2 213.8h0M2916.4 213.8h0M2921.2 213.8h0M2928.4 213.8h0M2933.2 213.8h0M2160.4 218.7h0M2165.2 218.7h0M2172.4 218.7h0M2177.2 218.7h0M2184.4 218.7h0M2189.2 218.7h0M2196.4 218.7h0M2201.2 218.7h0M2208.4 218.7h0M2225.2 218.7h0M2232.4 218.7h0M2244.4 218.7h0M2249.2 218.7h0M2268.4 218.7h0M2273.2 218.7h0M2297.2 218.7h0M2304.4 218.7h0M2309.2 218.7h0M2316.4 218.7h0M2321.2 218.7h0M2328.4 218.7h0M2333.2 218.7h0M2393.2 218.7h0M2400.4 218.7h0M2429.2 218.7h0M2436.4 218.7h0M2441.2 218.7h0M2448.4 218.7h0M2453.2 218.7h0M2460.4 218.7h0M2465.2 218.7h0M2472.4 218.7h0M2477.2 218.7h0M2484.4 218.7h0M2489.2 218.7h0M2508.4 218.7h0M2513.2 218.7h0M2525.2 218.7h0M2532.4 218.7h0M2537.2 218.7h0M2556.4 218.7h0M2561.2 218.7h0M2568.4 218.7h0M2573.2 218.7h0M2580.4 218.7h0M2585.2 218.7h0M2592.4 218.7h0M2597.2 218.7h0M2604.4 218.7h0M2609.2 218.7h0M2616.4 218.7h0M2621.2 218.7h0M2628.4 218.7h0M2633.2 218.7h0M2640.4 218.7h0M2645.2 218.7h0M2652.4 218.7h0M2657.2 218.7h0M2664.4 218.7h0M2669.2 218.7h0M2676.4 218.7h0M2681.2 218.7h0M2688.4 218.7h0M2693.2 218.7h0M2700.4 218.7h0M2712.4 218.7h0M2717.2 218.7h0M2724.4 218.7h0M2729.2 218.7h0M2837.2 218.7h0M2844.4 218.7h0M2849.2 218.7h0M2856.4 218.7h0M2861.2 218.7h0M2868.4 218.7h0M2880.4 218.7h0M2885.2 218.7h0M2897.2 218.7h0M2904.4 218.7h0M2909.2 218.7h0M2916.4 218.7h0M2921.2 218.7h0M2928.4 218.7h0M2933.2 218.7h0M2160.4 223.4h0M2165.2 223.4h0M2172.4 223.4h0M2177.2 223.4h0M2184.4 223.4h0M2189.2 223.4h0M2196.4 223.4h0M2201.2 223.4h0M2208.4 223.4h0M2213.2 223.4h0M2225.2 223.4h0M2232.4 223.4h0M2261.2 223.4h0M2268.4 223.4h0M2292.4 223.4h0M2297.2 223.4h0M2304.4 223.4h0M2309.2 223.4h0M2316.4 223.4h0M2321.2 223.4h0M2328.4 223.4h0M2333.2 223.4h0M2393.2 223.4h0M2400.4 223.4h0M2436.4 223.4h0M2441.2 223.4h0M2448.4 223.4h0M2453.2 223.4h0M2460.4 223.4h0M2465.2 223.4h0M2472.4 223.4h0M2477.2 223.4h0M2484.4 223.4h0M2489.2 223.4h0M2496.4 223.4h0M2508.4 223.4h0M2513.2 223.4h0M2532.4 223.4h0M2537.2 223.4h0M2544.4 223.4h0M2561.2 223.4h0M2568.4 223.4h0M2573.2 223.4h0M2580.4 223.4h0M2585.2 223.4h0M2592.4 223.4h0M2597.2 223.4h0M2604.4 223.4h0M2609.2 223.4h0M2616.4 223.4h0M2621.2 223.4h0M2628.4 223.4h0M2633.2 223.4h0M2640.4 223.4h0M2645.2 223.4h0M2652.4 223.4h0M2657.2 223.4h0M2664.4 223.4h0M2669.2 223.4h0M2676.4 223.4h0M2681.2 223.4h0M2688.4 223.4h0M2693.2 223.4h0M2705.2 223.4h0M2712.4 223.4h0M2717.2 223.4h0M2825.2 223.4h0M2832.4 223.4h0M2849.2 223.4h0M2856.4 223.4h0M2861.2 223.4h0M2868.4 223.4h0M2880.4 223.4h0M2885.2 223.4h0M2892.4 223.4h0M2897.2 223.4h0M2904.4 223.4h0M2909.2 223.4h0M2916.4 223.4h0M2921.2 223.4h0M2928.4 223.4h0M2933.2 223.4h0M2165.2 228.3h0M2172.4 228.3h0M2177.2 228.3h0M2184.4 228.3h0M2189.2 228.3h0M2196.4 228.3h0M2201.2 228.3h0M2208.4 228.3h0M2213.2 228.3h0M2220.4 228.3h0M2232.4 228.3h0M2244.4 228.3h0M2256.4 228.3h0M2292.4 228.3h0M2297.2 228.3h0M2304.4 228.3h0M2309.2 228.3h0M2316.4 228.3h0M2321.2 228.3h0M2328.4 228.3h0M2333.2 228.3h0M2441.2 228.3h0M2448.4 228.3h0M2453.2 228.3h0M2460.4 228.3h0M2465.2 228.3h0M2472.4 228.3h0M2477.2 228.3h0M2484.4 228.3h0M2489.2 228.3h0M2496.4 228.3h0M2501.2 228.3h0M2513.2 228.3h0M2520.4 228.3h0M2525.2 228.3h0M2537.2 228.3h0M2544.4 228.3h0M2549.2 228.3h0M2568.4 228.3h0M2573.2 228.3h0M2580.4 228.3h0M2585.2 228.3h0M2592.4 228.3h0M2597.2 228.3h0M2604.4 228.3h0M2609.2 228.3h0M2616.4 228.3h0M2621.2 228.3h0M2628.4 228.3h0M2633.2 228.3h0M2640.4 228.3h0M2645.2 228.3h0M2652.4 228.3h0M2657.2 228.3h0M2664.4 228.3h0M2669.2 228.3h0M2676.4 228.3h0M2681.2 228.3h0M2688.4 228.3h0M2700.4 228.3h0M2705.2 228.3h0M2856.4 228.3h0M2861.2 228.3h0M2868.4 228.3h0M2873.2 228.3h0M2885.2 228.3h0M2892.4 228.3h0M2897.2 228.3h0M2904.4 228.3h0M2909.2 228.3h0M2916.4 228.3h0M2921.2 228.3h0M2928.4 228.3h0M2933.2 228.3h0M2172.4 245.8h0M2177.2 245.8h0M2184.4 245.8h0M2189.2 245.8h0M2196.4 245.8h0M2201.2 245.8h0M2208.4 245.8h0M2213.2 245.8h0M2220.4 245.8h0M2232.4 245.8h0M2244.4 245.8h0M2256.4 245.8h0M2261.2 245.8h0M2292.4 245.8h0M2297.2 245.8h0M2304.4 245.8h0M2309.2 245.8h0M2316.4 245.8h0M2321.2 245.8h0M2328.4 245.8h0M2333.2 245.8h0M2340.4 245.8h0M2441.2 245.8h0M2448.4 245.8h0M2453.2 245.8h0M2460.4 245.8h0M2465.2 245.8h0M2472.4 245.8h0M2477.2 245.8h0M2484.4 245.8h0M2489.2 245.8h0M2496.4 245.8h0M2501.2 245.8h0M2508.4 245.8h0M2520.4 245.8h0M2525.2 245.8h0M2544.4 245.8h0M2549.2 245.8h0M2556.4 245.8h0M2568.4 245.8h0M2573.2 245.8h0M2580.4 245.8h0M2585.2 245.8h0M2592.4 245.8h0M2597.2 245.8h0M2604.4 245.8h0M2609.2 245.8h0M2616.4 245.8h0M2621.2 245.8h0M2628.4 245.8h0M2633.2 245.8h0M2640.4 245.8h0M2645.2 245.8h0M2652.4 245.8h0M2657.2 245.8h0M2664.4 245.8h0M2669.2 245.8h0M2676.4 245.8h0M2681.2 245.8h0M2693.2 245.8h0M2700.4 245.8h0M2748.4 245.8h0M2796.4 245.8h0M2861.2 245.8h0M2868.4 245.8h0M2873.2 245.8h0M2885.2 245.8h0M2892.4 245.8h0M2897.2 245.8h0M2904.4 245.8h0M2909.2 245.8h0M2916.4 245.8h0M2921.2 245.8h0M2928.4 245.8h0M2933.2 245.8h0M2165.2 250.7h0M2172.4 250.7h0M2177.2 250.7h0M2184.4 250.7h0M2189.2 250.7h0M2196.4 250.7h0M2201.2 250.7h0M2208.4 250.7h0M2213.2 250.7h0M2220.4 250.7h0M2232.4 250.7h0M2244.4 250.7h0M2256.4 250.7h0M2261.2 250.7h0M2268.4 250.7h0M2297.2 250.7h0M2304.4 250.7h0M2309.2 250.7h0M2316.4 250.7h0M2321.2 250.7h0M2328.4 250.7h0M2333.2 250.7h0M2340.4 250.7h0M2448.4 250.7h0M2453.2 250.7h0M2460.4 250.7h0M2465.2 250.7h0M2472.4 250.7h0M2477.2 250.7h0M2484.4 250.7h0M2489.2 250.7h0M2496.4 250.7h0M2501.2 250.7h0M2508.4 250.7h0M2513.2 250.7h0M2525.2 250.7h0M2532.4 250.7h0M2549.2 250.7h0M2556.4 250.7h0M2561.2 250.7h0M2573.2 250.7h0M2580.4 250.7h0M2585.2 250.7h0M2592.4 250.7h0M2597.2 250.7h0M2604.4 250.7h0M2609.2 250.7h0M2616.4 250.7h0M2621.2 250.7h0M2628.4 250.7h0M2633.2 250.7h0M2640.4 250.7h0M2645.2 250.7h0M2652.4 250.7h0M2657.2 250.7h0M2664.4 250.7h0M2669.2 250.7h0M2676.4 250.7h0M2681.2 250.7h0M2801.2 250.7h0M2808.4 250.7h0M2813.2 250.7h0M2868.4 250.7h0M2873.2 250.7h0M2885.2 250.7h0M2892.4 250.7h0M2897.2 250.7h0M2904.4 250.7h0M2909.2 250.7h0M2916.4 250.7h0M2921.2 250.7h0M2928.4 250.7h0M2933.2 250.7h0M2172.4 255.4h0M2177.2 255.4h0M2184.4 255.4h0M2189.2 255.4h0M2196.4 255.4h0M2201.2 255.4h0M2208.4 255.4h0M2213.2 255.4h0M2220.4 255.4h0M2225.2 255.4h0M2232.4 255.4h0M2237.2 255.4h0M2244.4 255.4h0M2249.2 255.4h0M2261.2 255.4h0M2268.4 255.4h0M2273.2 255.4h0M2297.2 255.4h0M2304.4 255.4h0M2309.2 255.4h0M2316.4 255.4h0M2321.2 255.4h0M2328.4 255.4h0M2333.2 255.4h0M2340.4 255.4h0M2364.4 255.4h0M2453.2 255.4h0M2460.4 255.4h0M2465.2 255.4h0M2472.4 255.4h0M2477.2 255.4h0M2484.4 255.4h0M2489.2 255.4h0M2496.4 255.4h0M2501.2 255.4h0M2508.4 255.4h0M2513.2 255.4h0M2520.4 255.4h0M2532.4 255.4h0M2537.2 255.4h0M2549.2 255.4h0M2556.4 255.4h0M2561.2 255.4h0M2580.4 255.4h0M2585.2 255.4h0M2592.4 255.4h0M2597.2 255.4h0M2604.4 255.4h0M2609.2 255.4h0M2616.4 255.4h0M2621.2 255.4h0M2628.4 255.4h0M2633.2 255.4h0M2640.4 255.4h0M2645.2 255.4h0M2652.4 255.4h0M2657.2 255.4h0M2664.4 255.4h0M2669.2 255.4h0M2676.4 255.4h0M2681.2 255.4h0M2801.2 255.4h0M2808.4 255.4h0M2813.2 255.4h0M2820.4 255.4h0M2880.4 255.4h0M2892.4 255.4h0M2897.2 255.4h0M2904.4 255.4h0M2909.2 255.4h0M2916.4 255.4h0M2921.2 255.4h0M2928.4 255.4h0M2933.2 255.4h0M2165.2 260.3h0M2172.4 260.3h0M2177.2 260.3h0M2184.4 260.3h0M2189.2 260.3h0M2196.4 260.3h0M2201.2 260.3h0M2208.4 260.3h0M2213.2 260.3h0M2220.4 260.3h0M2225.2 260.3h0M2237.2 260.3h0M2244.4 260.3h0M2249.2 260.3h0M2261.2 260.3h0M2268.4 260.3h0M2273.2 260.3h0M2285.2 260.3h0M2292.4 260.3h0M2297.2 260.3h0M2304.4 260.3h0M2309.2 260.3h0M2316.4 260.3h0M2321.2 260.3h0M2328.4 260.3h0M2333.2 260.3h0M2340.4 260.3h0M2345.2 260.3h0M2412.4 260.3h0M2453.2 260.3h0M2460.4 260.3h0M2465.2 260.3h0M2472.4 260.3h0M2477.2 260.3h0M2484.4 260.3h0M2489.2 260.3h0M2496.4 260.3h0M2501.2 260.3h0M2508.4 260.3h0M2513.2 260.3h0M2520.4 260.3h0M2525.2 260.3h0M2537.2 260.3h0M2544.4 260.3h0M2568.4 260.3h0M2585.2 260.3h0M2592.4 260.3h0M2597.2 260.3h0M2604.4 260.3h0M2609.2 260.3h0M2616.4 260.3h0M2621.2 260.3h0M2628.4 260.3h0M2633.2 260.3h0M2640.4 260.3h0M2645.2 260.3h0M2652.4 260.3h0M2657.2 260.3h0M2664.4 260.3h0M2669.2 260.3h0M2676.4 260.3h0M2681.2 260.3h0M2808.4 260.3h0M2813.2 260.3h0M2820.4 260.3h0M2825.2 260.3h0M2832.4 260.3h0M2892.4 260.3h0M2897.2 260.3h0M2904.4 260.3h0M2909.2 260.3h0M2916.4 260.3h0M2921.2 260.3h0M2928.4 260.3h0M2933.2 260.3h0M2177.2 277.8h0M2184.4 277.8h0M2189.2 277.8h0M2196.4 277.8h0M2201.2 277.8h0M2208.4 277.8h0M2213.2 277.8h0M2220.4 277.8h0M2225.2 277.8h0M2237.2 277.8h0M2249.2 277.8h0M2268.4 277.8h0M2273.2 277.8h0M2285.2 277.8h0M2292.4 277.8h0M2297.2 277.8h0M2304.4 277.8h0M2309.2 277.8h0M2316.4 277.8h0M2321.2 277.8h0M2328.4 277.8h0M2333.2 277.8h0M2340.4 277.8h0M2345.2 277.8h0M2369.2 277.8h0M2424.4 277.8h0M2460.4 277.8h0M2465.2 277.8h0M2472.4 277.8h0M2477.2 277.8h0M2484.4 277.8h0M2489.2 277.8h0M2496.4 277.8h0M2501.2 277.8h0M2508.4 277.8h0M2513.2 277.8h0M2520.4 277.8h0M2525.2 277.8h0M2532.4 277.8h0M2549.2 277.8h0M2556.4 277.8h0M2561.2 277.8h0M2573.2 277.8h0M2592.4 277.8h0M2597.2 277.8h0M2604.4 277.8h0M2609.2 277.8h0M2616.4 277.8h0M2621.2 277.8h0M2628.4 277.8h0M2633.2 277.8h0M2640.4 277.8h0M2645.2 277.8h0M2652.4 277.8h0M2657.2 277.8h0M2664.4 277.8h0M2669.2 277.8h0M2676.4 277.8h0M2765.2 277.8h0M2789.2 277.8h0M2808.4 277.8h0M2813.2 277.8h0M2820.4 277.8h0M2825.2 277.8h0M2832.4 277.8h0M2837.2 277.8h0M2868.4 277.8h0M2873.2 277.8h0M2892.4 277.8h0M2897.2 277.8h0M2904.4 277.8h0M2909.2 277.8h0M2916.4 277.8h0M2921.2 277.8h0M2928.4 277.8h0M2933.2 277.8h0M2172.4 282.7h0M2184.4 282.7h0M2196.4 282.7h0M2201.2 282.7h0M2208.4 282.7h0M2220.4 282.7h0M2225.2 282.7h0M2249.2 282.7h0M2268.4 282.7h0M2292.4 282.7h0M2297.2 282.7h0M2304.4 282.7h0M2309.2 282.7h0M2316.4 282.7h0M2321.2 282.7h0M2328.4 282.7h0M2333.2 282.7h0M2340.4 282.7h0M2345.2 282.7h0M2352.4 282.7h0M2376.4 282.7h0M2381.2 282.7h0M2460.4 282.7h0M2465.2 282.7h0M2472.4 282.7h0M2477.2 282.7h0M2484.4 282.7h0M2489.2 282.7h0M2496.4 282.7h0M2501.2 282.7h0M2508.4 282.7h0M2513.2 282.7h0M2520.4 282.7h0M2525.2 282.7h0M2532.4 282.7h0M2537.2 282.7h0M2549.2 282.7h0M2580.4 282.7h0M2597.2 282.7h0M2604.4 282.7h0M2609.2 282.7h0M2616.4 282.7h0M2621.2 282.7h0M2628.4 282.7h0M2633.2 282.7h0M2640.4 282.7h0M2645.2 282.7h0M2652.4 282.7h0M2657.2 282.7h0M2664.4 282.7h0M2784.4 282.7h0M2808.4 282.7h0M2813.2 282.7h0M2820.4 282.7h0M2825.2 282.7h0M2832.4 282.7h0M2837.2 282.7h0M2844.4 282.7h0M2880.4 282.7h0M2897.2 282.7h0M2904.4 282.7h0M2909.2 282.7h0M2916.4 282.7h0M2921.2 282.7h0M2928.4 282.7h0M2933.2 282.7h0M2189.2 287.4h0M2196.4 287.4h0M2201.2 287.4h0M2208.4 287.4h0M2220.4 287.4h0M2225.2 287.4h0M2232.4 287.4h0M2244.4 287.4h0M2249.2 287.4h0M2256.4 287.4h0M2273.2 287.4h0M2280.4 287.4h0M2292.4 287.4h0M2297.2 287.4h0M2304.4 287.4h0M2309.2 287.4h0M2316.4 287.4h0M2321.2 287.4h0M2328.4 287.4h0M2333.2 287.4h0M2340.4 287.4h0M2345.2 287.4h0M2352.4 287.4h0M2357.2 287.4h0M2381.2 287.4h0M2388.4 287.4h0M2400.4 287.4h0M2405.2 287.4h0M2412.4 287.4h0M2417.2 287.4h0M2429.2 287.4h0M2453.2 287.4h0M2460.4 287.4h0M2465.2 287.4h0M2472.4 287.4h0M2477.2 287.4h0M2484.4 287.4h0M2489.2 287.4h0M2496.4 287.4h0M2501.2 287.4h0M2508.4 287.4h0M2513.2 287.4h0M2520.4 287.4h0M2525.2 287.4h0M2532.4 287.4h0M2537.2 287.4h0M2544.4 287.4h0M2549.2 287.4h0M2556.4 287.4h0M2568.4 287.4h0M2573.2 287.4h0M2580.4 287.4h0M2585.2 287.4h0M2604.4 287.4h0M2609.2 287.4h0M2616.4 287.4h0M2621.2 287.4h0M2628.4 287.4h0M2633.2 287.4h0M2640.4 287.4h0M2645.2 287.4h0M2652.4 287.4h0M2657.2 287.4h0M2664.4 287.4h0M2669.2 287.4h0M2688.4 287.4h0M2748.4 287.4h0M2777.2 287.4h0M2789.2 287.4h0M2808.4 287.4h0M2813.2 287.4h0M2820.4 287.4h0M2825.2 287.4h0M2832.4 287.4h0M2837.2 287.4h0M2844.4 287.4h0M2849.2 287.4h0M2897.2 287.4h0M2904.4 287.4h0M2909.2 287.4h0M2916.4 287.4h0M2921.2 287.4h0M2928.4 287.4h0M2933.2 287.4h0M2189.2 292.3h0M2196.4 292.3h0M2201.2 292.3h0M2208.4 292.3h0M2213.2 292.3h0M2220.4 292.3h0M2225.2 292.3h0M2232.4 292.3h0M2244.4 292.3h0M2249.2 292.3h0M2256.4 292.3h0M2261.2 292.3h0M2273.2 292.3h0M2280.4 292.3h0M2292.4 292.3h0M2297.2 292.3h0M2304.4 292.3h0M2309.2 292.3h0M2316.4 292.3h0M2321.2 292.3h0M2328.4 292.3h0M2333.2 292.3h0M2340.4 292.3h0M2345.2 292.3h0M2352.4 292.3h0M2357.2 292.3h0M2364.4 292.3h0M2388.4 292.3h0M2393.2 292.3h0M2400.4 292.3h0M2405.2 292.3h0M2412.4 292.3h0M2417.2 292.3h0M2424.4 292.3h0M2441.2 292.3h0M2448.4 292.3h0M2453.2 292.3h0M2460.4 292.3h0M2465.2 292.3h0M2472.4 292.3h0M2477.2 292.3h0M2484.4 292.3h0M2489.2 292.3h0M2496.4 292.3h0M2501.2 292.3h0M2508.4 292.3h0M2513.2 292.3h0M2520.4 292.3h0M2525.2 292.3h0M2532.4 292.3h0M2537.2 292.3h0M2544.4 292.3h0M2549.2 292.3h0M2556.4 292.3h0M2561.2 292.3h0M2573.2 292.3h0M2580.4 292.3h0M2585.2 292.3h0M2592.4 292.3h0M2604.4 292.3h0M2609.2 292.3h0M2616.4 292.3h0M2621.2 292.3h0M2628.4 292.3h0M2633.2 292.3h0M2640.4 292.3h0M2645.2 292.3h0M2652.4 292.3h0M2657.2 292.3h0M2664.4 292.3h0M2669.2 292.3h0M2681.2 292.3h0M2688.4 292.3h0M2712.4 292.3h0M2724.4 292.3h0M2765.2 292.3h0M2772.4 292.3h0M2777.2 292.3h0M2789.2 292.3h0M2808.4 292.3h0M2813.2 292.3h0M2820.4 292.3h0M2825.2 292.3h0M2832.4 292.3h0M2837.2 292.3h0M2844.4 292.3h0M2849.2 292.3h0M2873.2 292.3h0M2885.2 292.3h0M2904.4 292.3h0M2916.4 292.3h0M2921.2 292.3h0M2928.4 292.3h0M2933.2 292.3h0M2196.4 309.8h0M2201.2 309.8h0M2208.4 309.8h0M2220.4 309.8h0M2225.2 309.8h0M2232.4 309.8h0M2237.2 309.8h0M2244.4 309.8h0M2249.2 309.8h0M2256.4 309.8h0M2261.2 309.8h0M2280.4 309.8h0M2292.4 309.8h0M2297.2 309.8h0M2304.4 309.8h0M2309.2 309.8h0M2316.4 309.8h0M2321.2 309.8h0M2328.4 309.8h0M2333.2 309.8h0M2340.4 309.8h0M2345.2 309.8h0M2352.4 309.8h0M2357.2 309.8h0M2364.4 309.8h0M2369.2 309.8h0M2376.4 309.8h0M2393.2 309.8h0M2400.4 309.8h0M2405.2 309.8h0M2412.4 309.8h0M2417.2 309.8h0M2424.4 309.8h0M2441.2 309.8h0M2448.4 309.8h0M2453.2 309.8h0M2460.4 309.8h0M2465.2 309.8h0M2472.4 309.8h0M2477.2 309.8h0M2484.4 309.8h0M2489.2 309.8h0M2496.4 309.8h0M2501.2 309.8h0M2508.4 309.8h0M2513.2 309.8h0M2520.4 309.8h0M2525.2 309.8h0M2532.4 309.8h0M2537.2 309.8h0M2544.4 309.8h0M2549.2 309.8h0M2556.4 309.8h0M2561.2 309.8h0M2580.4 309.8h0M2585.2 309.8h0M2592.4 309.8h0M2597.2 309.8h0M2609.2 309.8h0M2616.4 309.8h0M2621.2 309.8h0M2628.4 309.8h0M2633.2 309.8h0M2640.4 309.8h0M2645.2 309.8h0M2652.4 309.8h0M2657.2 309.8h0M2664.4 309.8h0M2669.2 309.8h0M2676.4 309.8h0M2681.2 309.8h0M2688.4 309.8h0M2717.2 309.8h0M2724.4 309.8h0M2772.4 309.8h0M2777.2 309.8h0M2789.2 309.8h0M2801.2 309.8h0M2808.4 309.8h0M2813.2 309.8h0M2820.4 309.8h0M2825.2 309.8h0M2832.4 309.8h0M2837.2 309.8h0M2844.4 309.8h0M2885.2 309.8h0M2892.4 309.8h0M2904.4 309.8h0M2909.2 309.8h0M2916.4 309.8h0M2921.2 309.8h0M2928.4 309.8h0M2933.2 309.8h0M2201.2 314.7h0M2208.4 314.7h0M2220.4 314.7h0M2225.2 314.7h0M2232.4 314.7h0M2237.2 314.7h0M2249.2 314.7h0M2256.4 314.7h0M2261.2 314.7h0M2268.4 314.7h0M2285.2 314.7h0M2292.4 314.7h0M2297.2 314.7h0M2304.4 314.7h0M2309.2 314.7h0M2316.4 314.7h0M2321.2 314.7h0M2328.4 314.7h0M2333.2 314.7h0M2340.4 314.7h0M2345.2 314.7h0M2352.4 314.7h0M2357.2 314.7h0M2364.4 314.7h0M2369.2 314.7h0M2376.4 314.7h0M2381.2 314.7h0M2436.4 314.7h0M2441.2 314.7h0M2448.4 314.7h0M2453.2 314.7h0M2460.4 314.7h0M2465.2 314.7h0M2472.4 314.7h0M2477.2 314.7h0M2484.4 314.7h0M2489.2 314.7h0M2496.4 314.7h0M2501.2 314.7h0M2508.4 314.7h0M2513.2 314.7h0M2520.4 314.7h0M2525.2 314.7h0M2532.4 314.7h0M2537.2 314.7h0M2544.4 314.7h0M2549.2 314.7h0M2556.4 314.7h0M2561.2 314.7h0M2568.4 314.7h0M2573.2 314.7h0M2585.2 314.7h0M2592.4 314.7h0M2597.2 314.7h0M2609.2 314.7h0M2616.4 314.7h0M2621.2 314.7h0M2628.4 314.7h0M2633.2 314.7h0M2640.4 314.7h0M2645.2 314.7h0M2652.4 314.7h0M2657.2 314.7h0M2664.4 314.7h0M2669.2 314.7h0M2676.4 314.7h0M2681.2 314.7h0M2688.4 314.7h0M2693.2 314.7h0M2717.2 314.7h0M2729.2 314.7h0M2736.4 314.7h0M2765.2 314.7h0M2772.4 314.7h0M2777.2 314.7h0M2801.2 314.7h0M2808.4 314.7h0M2813.2 314.7h0M2820.4 314.7h0M2825.2 314.7h0M2832.4 314.7h0M2837.2 314.7h0M2844.4 314.7h0M2861.2 314.7h0M2868.4 314.7h0M2873.2 314.7h0M2880.4 314.7h0M2904.4 314.7h0M2909.2 314.7h0M2916.4 314.7h0M2921.2 314.7h0M2928.4 314.7h0M2184.4 319.4h0M2201.2 319.4h0M2225.2 319.4h0M2232.4 319.4h0M2256.4 319.4h0M2261.2 319.4h0M2268.4 319.4h0M2273.2 319.4h0M2285.2 319.4h0M2297.2 319.4h0M2304.4 319.4h0M2309.2 319.4h0M2316.4 319.4h0M2321.2 319.4h0M2328.4 319.4h0M2333.2 319.4h0M2340.4 319.4h0M2345.2 319.4h0M2352.4 319.4h0M2357.2 319.4h0M2364.4 319.4h0M2369.2 319.4h0M2376.4 319.4h0M2381.2 319.4h0M2388.4 319.4h0M2393.2 319.4h0M2400.4 319.4h0M2412.4 319.4h0M2417.2 319.4h0M2424.4 319.4h0M2429.2 319.4h0M2436.4 319.4h0M2441.2 319.4h0M2448.4 319.4h0M2453.2 319.4h0M2460.4 319.4h0M2465.2 319.4h0M2472.4 319.4h0M2477.2 319.4h0M2484.4 319.4h0M2489.2 319.4h0M2496.4 319.4h0M2501.2 319.4h0M2508.4 319.4h0M2513.2 319.4h0M2520.4 319.4h0M2525.2 319.4h0M2532.4 319.4h0M2537.2 319.4h0M2544.4 319.4h0M2549.2 319.4h0M2556.4 319.4h0M2561.2 319.4h0M2568.4 319.4h0M2573.2 319.4h0M2592.4 319.4h0M2597.2 319.4h0M2604.4 319.4h0M2616.4 319.4h0M2621.2 319.4h0M2628.4 319.4h0M2633.2 319.4h0M2640.4 319.4h0M2645.2 319.4h0M2652.4 319.4h0M2657.2 319.4h0M2664.4 319.4h0M2669.2 319.4h0M2676.4 319.4h0M2681.2 319.4h0M2688.4 319.4h0M2693.2 319.4h0M2700.4 319.4h0M2729.2 319.4h0M2736.4 319.4h0M2741.2 319.4h0M2748.4 319.4h0M2753.2 319.4h0M2760.4 319.4h0M2765.2 319.4h0M2772.4 319.4h0M2777.2 319.4h0M2796.4 319.4h0M2801.2 319.4h0M2808.4 319.4h0M2813.2 319.4h0M2820.4 319.4h0M2825.2 319.4h0M2832.4 319.4h0M2837.2 319.4h0M2844.4 319.4h0M2856.4 319.4h0M2861.2 319.4h0M2868.4 319.4h0M2873.2 319.4h0M2880.4 319.4h0M2885.2 319.4h0M2892.4 319.4h0M2909.2 319.4h0M2916.4 319.4h0M2921.2 319.4h0M2928.4 319.4h0M2201.2 324.3h0M2213.2 324.3h0M2225.2 324.3h0M2232.4 324.3h0M2237.2 324.3h0M2256.4 324.3h0M2261.2 324.3h0M2268.4 324.3h0M2273.2 324.3h0M2297.2 324.3h0M2304.4 324.3h0M2309.2 324.3h0M2316.4 324.3h0M2321.2 324.3h0M2328.4 324.3h0M2333.2 324.3h0M2340.4 324.3h0M2345.2 324.3h0M2352.4 324.3h0M2357.2 324.3h0M2364.4 324.3h0M2369.2 324.3h0M2376.4 324.3h0M2381.2 324.3h0M2388.4 324.3h0M2393.2 324.3h0M2400.4 324.3h0M2405.2 324.3h0M2412.4 324.3h0M2417.2 324.3h0M2424.4 324.3h0M2429.2 324.3h0M2436.4 324.3h0M2441.2 324.3h0M2448.4 324.3h0M2453.2 324.3h0M2460.4 324.3h0M2465.2 324.3h0M2472.4 324.3h0M2477.2 324.3h0M2484.4 324.3h0M2489.2 324.3h0M2496.4 324.3h0M2501.2 324.3h0M2508.4 324.3h0M2513.2 324.3h0M2520.4 324.3h0M2525.2 324.3h0M2532.4 324.3h0M2537.2 324.3h0M2544.4 324.3h0M2549.2 324.3h0M2556.4 324.3h0M2561.2 324.3h0M2568.4 324.3h0M2573.2 324.3h0M2580.4 324.3h0M2597.2 324.3h0M2604.4 324.3h0M2609.2 324.3h0M2616.4 324.3h0M2628.4 324.3h0M2633.2 324.3h0M2640.4 324.3h0M2645.2 324.3h0M2652.4 324.3h0M2657.2 324.3h0M2664.4 324.3h0M2669.2 324.3h0M2676.4 324.3h0M2681.2 324.3h0M2688.4 324.3h0M2693.2 324.3h0M2700.4 324.3h0M2705.2 324.3h0M2724.4 324.3h0M2729.2 324.3h0M2741.2 324.3h0M2748.4 324.3h0M2753.2 324.3h0M2760.4 324.3h0M2772.4 324.3h0M2789.2 324.3h0M2796.4 324.3h0M2801.2 324.3h0M2808.4 324.3h0M2813.2 324.3h0M2820.4 324.3h0M2825.2 324.3h0M2832.4 324.3h0M2837.2 324.3h0M2844.4 324.3h0M2849.2 324.3h0M2856.4 324.3h0M2861.2 324.3h0M2868.4 324.3h0M2873.2 324.3h0M2880.4 324.3h0M2885.2 324.3h0M2892.4 324.3h0M2897.2 324.3h0M2909.2 324.3h0M2916.4 324.3h0M2921.2 324.3h0M2928.4 324.3h0M2189.2 341.8h0M2196.4 341.8h0M2201.2 341.8h0M2208.4 341.8h0M2220.4 341.8h0M2232.4 341.8h0M2237.2 341.8h0M2256.4 341.8h0M2261.2 341.8h0M2268.4 341.8h0M2273.2 341.8h0M2280.4 341.8h0M2304.4 341.8h0M2309.2 341.8h0M2316.4 341.8h0M2321.2 341.8h0M2328.4 341.8h0M2333.2 341.8h0M2340.4 341.8h0M2345.2 341.8h0M2352.4 341.8h0M2357.2 341.8h0M2364.4 341.8h0M2369.2 341.8h0M2376.4 341.8h0M2381.2 341.8h0M2388.4 341.8h0M2393.2 341.8h0M2400.4 341.8h0M2405.2 341.8h0M2412.4 341.8h0M2417.2 341.8h0M2424.4 341.8h0M2429.2 341.8h0M2436.4 341.8h0M2441.2 341.8h0M2448.4 341.8h0M2453.2 341.8h0M2460.4 341.8h0M2465.2 341.8h0M2472.4 341.8h0M2477.2 341.8h0M2484.4 341.8h0M2489.2 341.8h0M2496.4 341.8h0M2501.2 341.8h0M2508.4 341.8h0M2513.2 341.8h0M2520.4 341.8h0M2525.2 341.8h0M2532.4 341.8h0M2537.2 341.8h0M2544.4 341.8h0M2549.2 341.8h0M2556.4 341.8h0M2561.2 341.8h0M2568.4 341.8h0M2573.2 341.8h0M2580.4 341.8h0M2585.2 341.8h0M2592.4 341.8h0M2604.4 341.8h0M2609.2 341.8h0M2616.4 341.8h0M2621.2 341.8h0M2628.4 341.8h0M2633.2 341.8h0M2640.4 341.8h0M2645.2 341.8h0M2652.4 341.8h0M2657.2 341.8h0M2664.4 341.8h0M2669.2 341.8h0M2676.4 341.8h0M2681.2 341.8h0M2688.4 341.8h0M2693.2 341.8h0M2700.4 341.8h0M2705.2 341.8h0M2712.4 341.8h0M2736.4 341.8h0M2753.2 341.8h0M2789.2 341.8h0M2796.4 341.8h0M2801.2 341.8h0M2808.4 341.8h0M2813.2 341.8h0M2820.4 341.8h0M2825.2 341.8h0M2832.4 341.8h0M2837.2 341.8h0M2844.4 341.8h0M2856.4 341.8h0M2861.2 341.8h0M2868.4 341.8h0M2873.2 341.8h0M2880.4 341.8h0M2885.2 341.8h0M2892.4 341.8h0M2897.2 341.8h0M2904.4 341.8h0M2921.2 341.8h0M2928.4 341.8h0M2201.2 346.7h0M2208.4 346.7h0M2232.4 346.7h0M2237.2 346.7h0M2244.4 346.7h0M2256.4 346.7h0M2268.4 346.7h0M2273.2 346.7h0M2280.4 346.7h0M2285.2 346.7h0M2304.4 346.7h0M2316.4 346.7h0M2321.2 346.7h0M2328.4 346.7h0M2333.2 346.7h0M2340.4 346.7h0M2345.2 346.7h0M2352.4 346.7h0M2357.2 346.7h0M2364.4 346.7h0M2369.2 346.7h0M2376.4 346.7h0M2381.2 346.7h0M2388.4 346.7h0M2393.2 346.7h0M2400.4 346.7h0M2405.2 346.7h0M2412.4 346.7h0M2417.2 346.7h0M2424.4 346.7h0M2429.2 346.7h0M2436.4 346.7h0M2441.2 346.7h0M2448.4 346.7h0M2453.2 346.7h0M2460.4 346.7h0M2465.2 346.7h0M2472.4 346.7h0M2477.2 346.7h0M2484.4 346.7h0M2489.2 346.7h0M2496.4 346.7h0M2501.2 346.7h0M2508.4 346.7h0M2513.2 346.7h0M2520.4 346.7h0M2525.2 346.7h0M2532.4 346.7h0M2537.2 346.7h0M2544.4 346.7h0M2549.2 346.7h0M2556.4 346.7h0M2561.2 346.7h0M2568.4 346.7h0M2573.2 346.7h0M2580.4 346.7h0M2585.2 346.7h0M2592.4 346.7h0M2597.2 346.7h0M2616.4 346.7h0M2621.2 346.7h0M2628.4 346.7h0M2633.2 346.7h0M2640.4 346.7h0M2645.2 346.7h0M2652.4 346.7h0M2657.2 346.7h0M2664.4 346.7h0M2669.2 346.7h0M2676.4 346.7h0M2681.2 346.7h0M2688.4 346.7h0M2693.2 346.7h0M2700.4 346.7h0M2705.2 346.7h0M2712.4 346.7h0M2717.2 346.7h0M2724.4 346.7h0M2777.2 346.7h0M2784.4 346.7h0M2789.2 346.7h0M2796.4 346.7h0M2801.2 346.7h0M2808.4 346.7h0M2813.2 346.7h0M2820.4 346.7h0M2825.2 346.7h0M2832.4 346.7h0M2837.2 346.7h0M2844.4 346.7h0M2849.2 346.7h0M2856.4 346.7h0M2861.2 346.7h0M2868.4 346.7h0M2873.2 346.7h0M2880.4 346.7h0M2885.2 346.7h0M2892.4 346.7h0M2897.2 346.7h0M2904.4 346.7h0M2909.2 346.7h0M2921.2 346.7h0M2928.4 346.7h0M2201.2 351.4h0M2208.4 351.4h0M2225.2 351.4h0M2232.4 351.4h0M2237.2 351.4h0M2244.4 351.4h0M2261.2 351.4h0M2268.4 351.4h0M2273.2 351.4h0M2280.4 351.4h0M2285.2 351.4h0M2309.2 351.4h0M2316.4 351.4h0M2321.2 351.4h0M2328.4 351.4h0M2333.2 351.4h0M2340.4 351.4h0M2345.2 351.4h0M2352.4 351.4h0M2357.2 351.4h0M2364.4 351.4h0M2369.2 351.4h0M2376.4 351.4h0M2381.2 351.4h0M2388.4 351.4h0M2393.2 351.4h0M2400.4 351.4h0M2405.2 351.4h0M2412.4 351.4h0M2417.2 351.4h0M2424.4 351.4h0M2429.2 351.4h0M2436.4 351.4h0M2441.2 351.4h0M2448.4 351.4h0M2453.2 351.4h0M2460.4 351.4h0M2465.2 351.4h0M2472.4 351.4h0M2477.2 351.4h0M2484.4 351.4h0M2489.2 351.4h0M2496.4 351.4h0M2501.2 351.4h0M2508.4 351.4h0M2513.2 351.4h0M2520.4 351.4h0M2525.2 351.4h0M2532.4 351.4h0M2537.2 351.4h0M2544.4 351.4h0M2549.2 351.4h0M2556.4 351.4h0M2561.2 351.4h0M2568.4 351.4h0M2573.2 351.4h0M2580.4 351.4h0M2585.2 351.4h0M2592.4 351.4h0M2597.2 351.4h0M2604.4 351.4h0M2621.2 351.4h0M2628.4 351.4h0M2633.2 351.4h0M2640.4 351.4h0M2657.2 351.4h0M2664.4 351.4h0M2669.2 351.4h0M2676.4 351.4h0M2681.2 351.4h0M2688.4 351.4h0M2693.2 351.4h0M2700.4 351.4h0M2705.2 351.4h0M2712.4 351.4h0M2717.2 351.4h0M2724.4 351.4h0M2729.2 351.4h0M2736.4 351.4h0M2741.2 351.4h0M2748.4 351.4h0M2753.2 351.4h0M2760.4 351.4h0M2765.2 351.4h0M2772.4 351.4h0M2777.2 351.4h0M2784.4 351.4h0M2789.2 351.4h0M2796.4 351.4h0M2801.2 351.4h0M2808.4 351.4h0M2813.2 351.4h0M2820.4 351.4h0M2825.2 351.4h0M2832.4 351.4h0M2837.2 351.4h0M2844.4 351.4h0M2849.2 351.4h0M2856.4 351.4h0M2861.2 351.4h0M2868.4 351.4h0M2873.2 351.4h0M2880.4 351.4h0M2885.2 351.4h0M2892.4 351.4h0M2897.2 351.4h0M2904.4 351.4h0M2909.2 351.4h0M2916.4 351.4h0M2208.4 356.3h0M2213.2 356.3h0M2225.2 356.3h0M2237.2 356.3h0M2244.4 356.3h0M2268.4 356.3h0M2273.2 356.3h0M2280.4 356.3h0M2285.2 356.3h0M2309.2 356.3h0M2316.4 356.3h0M2321.2 356.3h0M2328.4 356.3h0M2333.2 356.3h0M2340.4 356.3h0M2345.2 356.3h0M2352.4 356.3h0M2357.2 356.3h0M2364.4 356.3h0M2369.2 356.3h0M2376.4 356.3h0M2381.2 356.3h0M2388.4 356.3h0M2393.2 356.3h0M2400.4 356.3h0M2405.2 356.3h0M2412.4 356.3h0M2417.2 356.3h0M2424.4 356.3h0M2429.2 356.3h0M2436.4 356.3h0M2441.2 356.3h0M2448.4 356.3h0M2453.2 356.3h0M2460.4 356.3h0M2465.2 356.3h0M2472.4 356.3h0M2477.2 356.3h0M2484.4 356.3h0M2489.2 356.3h0M2496.4 356.3h0M2501.2 356.3h0M2508.4 356.3h0M2513.2 356.3h0M2520.4 356.3h0M2525.2 356.3h0M2532.4 356.3h0M2537.2 356.3h0M2544.4 356.3h0M2549.2 356.3h0M2556.4 356.3h0M2561.2 356.3h0M2568.4 356.3h0M2573.2 356.3h0M2580.4 356.3h0M2585.2 356.3h0M2592.4 356.3h0M2597.2 356.3h0M2604.4 356.3h0M2609.2 356.3h0M2616.4 356.3h0M2628.4 356.3h0M2633.2 356.3h0M2640.4 356.3h0M2645.2 356.3h0M2652.4 356.3h0M2657.2 356.3h0M2664.4 356.3h0M2669.2 356.3h0M2676.4 356.3h0M2681.2 356.3h0M2688.4 356.3h0M2693.2 356.3h0M2700.4 356.3h0M2705.2 356.3h0M2712.4 356.3h0M2717.2 356.3h0M2724.4 356.3h0M2729.2 356.3h0M2736.4 356.3h0M2741.2 356.3h0M2748.4 356.3h0M2753.2 356.3h0M2760.4 356.3h0M2765.2 356.3h0M2772.4 356.3h0M2777.2 356.3h0M2784.4 356.3h0M2789.2 356.3h0M2796.4 356.3h0M2801.2 356.3h0M2808.4 356.3h0M2813.2 356.3h0M2820.4 356.3h0M2825.2 356.3h0M2832.4 356.3h0M2837.2 356.3h0M2844.4 356.3h0M2849.2 356.3h0M2856.4 356.3h0M2861.2 356.3h0M2868.4 356.3h0M2873.2 356.3h0M2880.4 356.3h0M2885.2 356.3h0M2892.4 356.3h0M2897.2 356.3h0M2904.4 356.3h0M2909.2 356.3h0M2916.4 356.3h0M2213.2 373.8h0M2225.2 373.8h0M2244.4 373.8h0M2256.4 373.8h0M2268.4 373.8h0M2273.2 373.8h0M2280.4 373.8h0M2285.2 373.8h0M2292.4 373.8h0M2316.4 373.8h0M2321.2 373.8h0M2328.4 373.8h0M2333.2 373.8h0M2340.4 373.8h0M2345.2 373.8h0M2352.4 373.8h0M2357.2 373.8h0M2364.4 373.8h0M2369.2 373.8h0M2376.4 373.8h0M2381.2 373.8h0M2388.4 373.8h0M2393.2 373.8h0M2400.4 373.8h0M2405.2 373.8h0M2412.4 373.8h0M2417.2 373.8h0M2424.4 373.8h0M2429.2 373.8h0M2436.4 373.8h0M2441.2 373.8h0M2448.4 373.8h0M2453.2 373.8h0M2460.4 373.8h0M2465.2 373.8h0M2472.4 373.8h0M2477.2 373.8h0M2484.4 373.8h0M2489.2 373.8h0M2496.4 373.8h0M2501.2 373.8h0M2508.4 373.8h0M2513.2 373.8h0M2520.4 373.8h0M2525.2 373.8h0M2532.4 373.8h0M2537.2 373.8h0M2544.4 373.8h0M2549.2 373.8h0M2556.4 373.8h0M2561.2 373.8h0M2568.4 373.8h0M2573.2 373.8h0M2580.4 373.8h0M2585.2 373.8h0M2592.4 373.8h0M2597.2 373.8h0M2604.4 373.8h0M2609.2 373.8h0M2616.4 373.8h0M2621.2 373.8h0M2633.2 373.8h0M2640.4 373.8h0M2652.4 373.8h0M2657.2 373.8h0M2664.4 373.8h0M2669.2 373.8h0M2676.4 373.8h0M2681.2 373.8h0M2688.4 373.8h0M2693.2 373.8h0M2700.4 373.8h0M2705.2 373.8h0M2712.4 373.8h0M2717.2 373.8h0M2724.4 373.8h0M2729.2 373.8h0M2736.4 373.8h0M2741.2 373.8h0M2748.4 373.8h0M2753.2 373.8h0M2760.4 373.8h0M2765.2 373.8h0M2772.4 373.8h0M2777.2 373.8h0M2784.4 373.8h0M2789.2 373.8h0M2796.4 373.8h0M2801.2 373.8h0M2808.4 373.8h0M2813.2 373.8h0M2820.4 373.8h0M2825.2 373.8h0M2832.4 373.8h0M2837.2 373.8h0M2844.4 373.8h0M2849.2 373.8h0M2856.4 373.8h0M2861.2 373.8h0M2868.4 373.8h0M2873.2 373.8h0M2880.4 373.8h0M2885.2 373.8h0M2892.4 373.8h0M2897.2 373.8h0M2904.4 373.8h0M2909.2 373.8h0M2916.4 373.8h0M2213.2 378.7h0M2232.4 378.7h0M2244.4 378.7h0M2256.4 378.7h0M2273.2 378.7h0M2280.4 378.7h0M2285.2 378.7h0M2292.4 378.7h0M2297.2 378.7h0M2321.2 378.7h0M2328.4 378.7h0M2333.2 378.7h0M2340.4 378.7h0M2345.2 378.7h0M2352.4 378.7h0M2357.2 378.7h0M2364.4 378.7h0M2369.2 378.7h0M2376.4 378.7h0M2381.2 378.7h0M2388.4 378.7h0M2393.2 378.7h0M2400.4 378.7h0M2405.2 378.7h0M2412.4 378.7h0M2417.2 378.7h0M2424.4 378.7h0M2429.2 378.7h0M2436.4 378.7h0M2441.2 378.7h0M2448.4 378.7h0M2453.2 378.7h0M2460.4 378.7h0M2465.2 378.7h0M2472.4 378.7h0M2477.2 378.7h0M2484.4 378.7h0M2489.2 378.7h0M2496.4 378.7h0M2501.2 378.7h0M2508.4 378.7h0M2513.2 378.7h0M2520.4 378.7h0M2525.2 378.7h0M2532.4 378.7h0M2537.2 378.7h0M2544.4 378.7h0M2549.2 378.7h0M2556.4 378.7h0M2561.2 378.7h0M2568.4 378.7h0M2573.2 378.7h0M2580.4 378.7h0M2585.2 378.7h0M2592.4 378.7h0M2597.2 378.7h0M2604.4 378.7h0M2609.2 378.7h0M2616.4 378.7h0M2621.2 378.7h0M2628.4 378.7h0M2657.2 378.7h0M2664.4 378.7h0M2669.2 378.7h0M2676.4 378.7h0M2681.2 378.7h0M2688.4 378.7h0M2693.2 378.7h0M2700.4 378.7h0M2705.2 378.7h0M2712.4 378.7h0M2717.2 378.7h0M2724.4 378.7h0M2729.2 378.7h0M2736.4 378.7h0M2741.2 378.7h0M2748.4 378.7h0M2753.2 378.7h0M2760.4 378.7h0M2765.2 378.7h0M2772.4 378.7h0M2777.2 378.7h0M2784.4 378.7h0M2789.2 378.7h0M2796.4 378.7h0M2801.2 378.7h0M2808.4 378.7h0M2813.2 378.7h0M2820.4 378.7h0M2825.2 378.7h0M2832.4 378.7h0M2837.2 378.7h0M2844.4 378.7h0M2849.2 378.7h0M2856.4 378.7h0M2861.2 378.7h0M2868.4 378.7h0M2873.2 378.7h0M2880.4 378.7h0M2885.2 378.7h0M2892.4 378.7h0M2897.2 378.7h0M2904.4 378.7h0M2921.2 378.7h0M2928.4 378.7h0M2256.4 383.4h0M2261.2 383.4h0M2273.2 383.4h0M2280.4 383.4h0M2285.2 383.4h0M2292.4 383.4h0M2297.2 383.4h0M2304.4 383.4h0M2328.4 383.4h0M2333.2 383.4h0M2340.4 383.4h0M2345.2 383.4h0M2352.4 383.4h0M2357.2 383.4h0M2364.4 383.4h0M2369.2 383.4h0M2376.4 383.4h0M2381.2 383.4h0M2388.4 383.4h0M2393.2 383.4h0M2400.4 383.4h0M2405.2 383.4h0M2412.4 383.4h0M2417.2 383.4h0M2424.4 383.4h0M2429.2 383.4h0M2436.4 383.4h0M2441.2 383.4h0M2448.4 383.4h0M2453.2 383.4h0M2460.4 383.4h0M2465.2 383.4h0M2472.4 383.4h0M2477.2 383.4h0M2484.4 383.4h0M2489.2 383.4h0M2496.4 383.4h0M2501.2 383.4h0M2508.4 383.4h0M2513.2 383.4h0M2520.4 383.4h0M2525.2 383.4h0M2532.4 383.4h0M2537.2 383.4h0M2544.4 383.4h0M2549.2 383.4h0M2556.4 383.4h0M2561.2 383.4h0M2568.4 383.4h0M2573.2 383.4h0M2580.4 383.4h0M2585.2 383.4h0M2592.4 383.4h0M2597.2 383.4h0M2604.4 383.4h0M2609.2 383.4h0M2616.4 383.4h0M2621.2 383.4h0M2628.4 383.4h0M2633.2 383.4h0M2640.4 383.4h0M2664.4 383.4h0M2669.2 383.4h0M2676.4 383.4h0M2688.4 383.4h0M2693.2 383.4h0M2700.4 383.4h0M2705.2 383.4h0M2712.4 383.4h0M2717.2 383.4h0M2724.4 383.4h0M2729.2 383.4h0M2736.4 383.4h0M2741.2 383.4h0M2748.4 383.4h0M2753.2 383.4h0M2760.4 383.4h0M2765.2 383.4h0M2772.4 383.4h0M2777.2 383.4h0M2784.4 383.4h0M2789.2 383.4h0M2796.4 383.4h0M2801.2 383.4h0M2808.4 383.4h0M2813.2 383.4h0M2820.4 383.4h0M2825.2 383.4h0M2832.4 383.4h0M2837.2 383.4h0M2844.4 383.4h0M2849.2 383.4h0M2856.4 383.4h0M2861.2 383.4h0M2868.4 383.4h0M2873.2 383.4h0M2880.4 383.4h0M2885.2 383.4h0M2892.4 383.4h0M2897.2 383.4h0M2916.4 383.4h0M2201.2 388.3h0M2208.4 388.3h0M2213.2 388.3h0M2237.2 388.3h0M2256.4 388.3h0M2261.2 388.3h0M2268.4 388.3h0M2280.4 388.3h0M2285.2 388.3h0M2292.4 388.3h0M2297.2 388.3h0M2304.4 388.3h0M2328.4 388.3h0M2333.2 388.3h0M2340.4 388.3h0M2345.2 388.3h0M2352.4 388.3h0M2357.2 388.3h0M2364.4 388.3h0M2369.2 388.3h0M2376.4 388.3h0M2381.2 388.3h0M2388.4 388.3h0M2393.2 388.3h0M2400.4 388.3h0M2405.2 388.3h0M2412.4 388.3h0M2417.2 388.3h0M2424.4 388.3h0M2429.2 388.3h0M2436.4 388.3h0M2441.2 388.3h0M2448.4 388.3h0M2453.2 388.3h0M2460.4 388.3h0M2465.2 388.3h0M2472.4 388.3h0M2477.2 388.3h0M2484.4 388.3h0M2489.2 388.3h0M2496.4 388.3h0M2501.2 388.3h0M2508.4 388.3h0M2513.2 388.3h0M2520.4 388.3h0M2525.2 388.3h0M2532.4 388.3h0M2537.2 388.3h0M2544.4 388.3h0M2549.2 388.3h0M2556.4 388.3h0M2561.2 388.3h0M2568.4 388.3h0M2573.2 388.3h0M2580.4 388.3h0M2585.2 388.3h0M2592.4 388.3h0M2597.2 388.3h0M2604.4 388.3h0M2609.2 388.3h0M2616.4 388.3h0M2621.2 388.3h0M2628.4 388.3h0M2633.2 388.3h0M2640.4 388.3h0M2645.2 388.3h0M2652.4 388.3h0M2669.2 388.3h0M2676.4 388.3h0M2681.2 388.3h0M2700.4 388.3h0M2705.2 388.3h0M2712.4 388.3h0M2717.2 388.3h0M2724.4 388.3h0M2729.2 388.3h0M2736.4 388.3h0M2741.2 388.3h0M2748.4 388.3h0M2753.2 388.3h0M2760.4 388.3h0M2765.2 388.3h0M2772.4 388.3h0M2777.2 388.3h0M2784.4 388.3h0M2789.2 388.3h0M2796.4 388.3h0M2801.2 388.3h0M2808.4 388.3h0M2813.2 388.3h0M2820.4 388.3h0M2825.2 388.3h0M2832.4 388.3h0M2837.2 388.3h0M2844.4 388.3h0M2849.2 388.3h0M2856.4 388.3h0M2861.2 388.3h0M2868.4 388.3h0M2873.2 388.3h0M2880.4 388.3h0M2885.2 388.3h0M2892.4 388.3h0M2897.2 388.3h0M2916.4 388.3h0M2232.4 405.8h0M2237.2 405.8h0M2244.4 405.8h0M2261.2 405.8h0M2268.4 405.8h0M2285.2 405.8h0M2292.4 405.8h0M2297.2 405.8h0M2304.4 405.8h0M2309.2 405.8h0M2316.4 405.8h0M2321.2 405.8h0M2340.4 405.8h0M2345.2 405.8h0M2352.4 405.8h0M2357.2 405.8h0M2364.4 405.8h0M2369.2 405.8h0M2376.4 405.8h0M2381.2 405.8h0M2388.4 405.8h0M2393.2 405.8h0M2400.4 405.8h0M2405.2 405.8h0M2412.4 405.8h0M2417.2 405.8h0M2424.4 405.8h0M2429.2 405.8h0M2436.4 405.8h0M2441.2 405.8h0M2448.4 405.8h0M2453.2 405.8h0M2460.4 405.8h0M2465.2 405.8h0M2472.4 405.8h0M2477.2 405.8h0M2484.4 405.8h0M2489.2 405.8h0M2496.4 405.8h0M2501.2 405.8h0M2508.4 405.8h0M2513.2 405.8h0M2520.4 405.8h0M2525.2 405.8h0M2532.4 405.8h0M2537.2 405.8h0M2544.4 405.8h0M2549.2 405.8h0M2556.4 405.8h0M2561.2 405.8h0M2568.4 405.8h0M2573.2 405.8h0M2580.4 405.8h0M2585.2 405.8h0M2592.4 405.8h0M2597.2 405.8h0M2604.4 405.8h0M2609.2 405.8h0M2616.4 405.8h0M2621.2 405.8h0M2628.4 405.8h0M2633.2 405.8h0M2640.4 405.8h0M2645.2 405.8h0M2652.4 405.8h0M2657.2 405.8h0M2664.4 405.8h0M2669.2 405.8h0M2676.4 405.8h0M2681.2 405.8h0M2688.4 405.8h0M2712.4 405.8h0M2717.2 405.8h0M2724.4 405.8h0M2729.2 405.8h0M2736.4 405.8h0M2741.2 405.8h0M2748.4 405.8h0M2753.2 405.8h0M2760.4 405.8h0M2765.2 405.8h0M2772.4 405.8h0M2777.2 405.8h0M2784.4 405.8h0M2789.2 405.8h0M2796.4 405.8h0M2801.2 405.8h0M2808.4 405.8h0M2813.2 405.8h0M2820.4 405.8h0M2825.2 405.8h0M2832.4 405.8h0M2837.2 405.8h0M2844.4 405.8h0M2849.2 405.8h0M2856.4 405.8h0M2861.2 405.8h0M2868.4 405.8h0M2873.2 405.8h0M2880.4 405.8h0M2885.2 405.8h0M2892.4 405.8h0M2897.2 405.8h0M2904.4 405.8h0M2909.2 405.8h0M2916.4 405.8h0M2232.4 410.7h0M2237.2 410.7h0M2244.4 410.7h0M2249.2 410.7h0M2261.2 410.7h0M2268.4 410.7h0M2273.2 410.7h0M2292.4 410.7h0M2297.2 410.7h0M2304.4 410.7h0M2309.2 410.7h0M2316.4 410.7h0M2321.2 410.7h0M2328.4 410.7h0M2345.2 410.7h0M2357.2 410.7h0M2364.4 410.7h0M2369.2 410.7h0M2376.4 410.7h0M2381.2 410.7h0M2388.4 410.7h0M2393.2 410.7h0M2400.4 410.7h0M2405.2 410.7h0M2412.4 410.7h0M2417.2 410.7h0M2424.4 410.7h0M2429.2 410.7h0M2436.4 410.7h0M2441.2 410.7h0M2448.4 410.7h0M2453.2 410.7h0M2460.4 410.7h0M2465.2 410.7h0M2472.4 410.7h0M2477.2 410.7h0M2484.4 410.7h0M2489.2 410.7h0M2496.4 410.7h0M2501.2 410.7h0M2508.4 410.7h0M2513.2 410.7h0M2520.4 410.7h0M2525.2 410.7h0M2532.4 410.7h0M2537.2 410.7h0M2544.4 410.7h0M2549.2 410.7h0M2556.4 410.7h0M2561.2 410.7h0M2568.4 410.7h0M2573.2 410.7h0M2580.4 410.7h0M2585.2 410.7h0M2592.4 410.7h0M2597.2 410.7h0M2604.4 410.7h0M2609.2 410.7h0M2616.4 410.7h0M2621.2 410.7h0M2628.4 410.7h0M2633.2 410.7h0M2640.4 410.7h0M2645.2 410.7h0M2652.4 410.7h0M2657.2 410.7h0M2664.4 410.7h0M2681.2 410.7h0M2688.4 410.7h0M2693.2 410.7h0M2700.4 410.7h0M2717.2 410.7h0M2724.4 410.7h0M2729.2 410.7h0M2736.4 410.7h0M2741.2 410.7h0M2748.4 410.7h0M2753.2 410.7h0M2760.4 410.7h0M2765.2 410.7h0M2772.4 410.7h0M2777.2 410.7h0M2784.4 410.7h0M2789.2 410.7h0M2796.4 410.7h0M2801.2 410.7h0M2808.4 410.7h0M2813.2 410.7h0M2820.4 410.7h0M2825.2 410.7h0M2832.4 410.7h0M2837.2 410.7h0M2844.4 410.7h0M2849.2 410.7h0M2856.4 410.7h0M2861.2 410.7h0M2868.4 410.7h0M2873.2 410.7h0M2880.4 410.7h0M2885.2 410.7h0M2892.4 410.7h0M2897.2 410.7h0M2916.4 410.7h0M2244.4 415.4h0M2249.2 415.4h0M2256.4 415.4h0M2268.4 415.4h0M2273.2 415.4h0M2280.4 415.4h0M2297.2 415.4h0M2304.4 415.4h0M2309.2 415.4h0M2316.4 415.4h0M2321.2 415.4h0M2328.4 415.4h0M2333.2 415.4h0M2340.4 415.4h0M2357.2 415.4h0M2364.4 415.4h0M2369.2 415.4h0M2376.4 415.4h0M2381.2 415.4h0M2388.4 415.4h0M2393.2 415.4h0M2400.4 415.4h0M2405.2 415.4h0M2412.4 415.4h0M2417.2 415.4h0M2424.4 415.4h0M2429.2 415.4h0M2436.4 415.4h0M2441.2 415.4h0M2448.4 415.4h0M2453.2 415.4h0M2460.4 415.4h0M2465.2 415.4h0M2472.4 415.4h0M2477.2 415.4h0M2484.4 415.4h0M2489.2 415.4h0M2496.4 415.4h0M2501.2 415.4h0M2508.4 415.4h0M2513.2 415.4h0M2520.4 415.4h0M2525.2 415.4h0M2532.4 415.4h0M2537.2 415.4h0M2544.4 415.4h0M2549.2 415.4h0M2556.4 415.4h0M2561.2 415.4h0M2568.4 415.4h0M2573.2 415.4h0M2580.4 415.4h0M2585.2 415.4h0M2592.4 415.4h0M2597.2 415.4h0M2604.4 415.4h0M2609.2 415.4h0M2616.4 415.4h0M2621.2 415.4h0M2628.4 415.4h0M2633.2 415.4h0M2640.4 415.4h0M2645.2 415.4h0M2652.4 415.4h0M2657.2 415.4h0M2664.4 415.4h0M2669.2 415.4h0M2681.2 415.4h0M2688.4 415.4h0M2693.2 415.4h0M2700.4 415.4h0M2705.2 415.4h0M2717.2 415.4h0M2724.4 415.4h0M2729.2 415.4h0M2736.4 415.4h0M2741.2 415.4h0M2748.4 415.4h0M2753.2 415.4h0M2760.4 415.4h0M2765.2 415.4h0M2772.4 415.4h0M2777.2 415.4h0M2784.4 415.4h0M2789.2 415.4h0M2796.4 415.4h0M2801.2 415.4h0M2808.4 415.4h0M2813.2 415.4h0M2820.4 415.4h0M2825.2 415.4h0M2832.4 415.4h0M2837.2 415.4h0M2844.4 415.4h0M2849.2 415.4h0M2856.4 415.4h0M2861.2 415.4h0M2868.4 415.4h0M2873.2 415.4h0M2880.4 415.4h0M2885.2 415.4h0M2892.4 415.4h0M2897.2 415.4h0M2249.2 420.3h0M2256.4 420.3h0M2261.2 420.3h0M2273.2 420.3h0M2280.4 420.3h0M2304.4 420.3h0M2309.2 420.3h0M2316.4 420.3h0M2321.2 420.3h0M2328.4 420.3h0M2333.2 420.3h0M2340.4 420.3h0M2345.2 420.3h0M2352.4 420.3h0M2357.2 420.3h0M2364.4 420.3h0M2369.2 420.3h0M2376.4 420.3h0M2381.2 420.3h0M2388.4 420.3h0M2393.2 420.3h0M2400.4 420.3h0M2405.2 420.3h0M2412.4 420.3h0M2417.2 420.3h0M2424.4 420.3h0M2429.2 420.3h0M2436.4 420.3h0M2441.2 420.3h0M2448.4 420.3h0M2453.2 420.3h0M2460.4 420.3h0M2465.2 420.3h0M2472.4 420.3h0M2477.2 420.3h0M2484.4 420.3h0M2489.2 420.3h0M2496.4 420.3h0M2501.2 420.3h0M2508.4 420.3h0M2513.2 420.3h0M2520.4 420.3h0M2525.2 420.3h0M2532.4 420.3h0M2537.2 420.3h0M2544.4 420.3h0M2549.2 420.3h0M2556.4 420.3h0M2561.2 420.3h0M2568.4 420.3h0M2573.2 420.3h0M2580.4 420.3h0M2585.2 420.3h0M2592.4 420.3h0M2597.2 420.3h0M2604.4 420.3h0M2609.2 420.3h0M2616.4 420.3h0M2621.2 420.3h0M2628.4 420.3h0M2633.2 420.3h0M2640.4 420.3h0M2645.2 420.3h0M2652.4 420.3h0M2657.2 420.3h0M2664.4 420.3h0M2669.2 420.3h0M2676.4 420.3h0M2681.2 420.3h0M2688.4 420.3h0M2693.2 420.3h0M2700.4 420.3h0M2705.2 420.3h0M2712.4 420.3h0M2717.2 420.3h0M2729.2 420.3h0M2736.4 420.3h0M2741.2 420.3h0M2748.4 420.3h0M2753.2 420.3h0M2760.4 420.3h0M2765.2 420.3h0M2772.4 420.3h0M2777.2 420.3h0M2784.4 420.3h0M2789.2 420.3h0M2796.4 420.3h0M2801.2 420.3h0M2808.4 420.3h0M2813.2 420.3h0M2820.4 420.3h0M2825.2 420.3h0M2832.4 420.3h0M2837.2 420.3h0M2844.4 420.3h0M2849.2 420.3h0M2856.4 420.3h0M2861.2 420.3h0M2868.4 420.3h0M2873.2 420.3h0M2880.4 420.3h0M2885.2 420.3h0" stroke="#f4f2fa" stroke-width="2.5" stroke-linecap="round" fill="none"/><path d="M62.0 155h0M98.0 155h0M122.0 155h0M146.0 155h0M158.0 155h0M278.0 155h0M422.0 155h0M434.0 155h0M698.0 155h0M866.0 155h0M962.0 155h0M1010.0 155h0M1082.0 155h0M1298.0 155h0M1406.0 155h0M1514.0 155h0M1526.0 155h0M1574.0 155h0M1586.0 155h0M62.0 187h0M206.0 187h0M278.0 187h0M338.0 187h0M602.0 187h0M614.0 187h0M854.0 187h0M1178.0 187h0M1490.0 187h0M1526.0 187h0M410.0 219h0M434.0 219h0M710.0 219h0M746.0 219h0M794.0 219h0M866.0 219h0M1010.0 219h0M1022.0 219h0M1058.0 219h0M1106.0 219h0M1130.0 219h0M1274.0 219h0M1382.0 219h0M1406.0 219h0M86.0 251h0M110.0 251h0M158.0 251h0M374.0 251h0M446.0 251h0M470.0 251h0M494.0 251h0M506.0 251h0M686.0 251h0M890.0 251h0M1010.0 251h0M1082.0 251h0M1118.0 251h0M1274.0 251h0M1346.0 251h0M1358.0 251h0M1526.0 251h0M206.0 283h0M218.0 283h0M314.0 283h0M494.0 283h0M710.0 283h0M782.0 283h0M1070.0 283h0M1094.0 283h0M1226.0 283h0M1406.0 283h0M1418.0 283h0M1478.0 283h0M110.0 315h0M242.0 315h0M314.0 315h0M458.0 315h0M554.0 315h0M890.0 315h0M902.0 315h0M1034.0 315h0M1106.0 315h0M1238.0 315h0M1322.0 315h0M1370.0 315h0M1382.0 315h0M1394.0 315h0M1550.0 315h0M38.0 347h0M278.0 347h0M326.0 347h0M338.0 347h0M422.0 347h0M434.0 347h0M866.0 347h0M1154.0 347h0M1250.0 347h0M1310.0 347h0M1514.0 347h0M1610.0 347h0M1658.0 347h0M1862.0 347h0M2114.0 347h0M50.0 379h0M206.0 379h0M350.0 379h0M386.0 379h0M410.0 379h0M458.0 379h0M662.0 379h0M830.0 379h0M1178.0 379h0M1274.0 379h0M1286.0 379h0M1394.0 379h0M1406.0 379h0M1574.0 379h0M1646.0 379h0M1766.0 379h0M1814.0 379h0M1838.0 379h0M1982.0 379h0M2030.0 379h0M38.0 411h0M230.0 411h0M530.0 411h0M566.0 411h0M626.0 411h0M638.0 411h0M698.0 411h0M770.0 411h0M854.0 411h0M938.0 411h0M950.0 411h0M1010.0 411h0M1130.0 411h0M1238.0 411h0M1274.0 411h0M1322.0 411h0M1514.0 411h0M1622.0 411h0M1646.0 411h0M194.0 443h0M518.0 443h0M734.0 443h0M1010.0 443h0M1046.0 443h0M1502.0 443h0M1646.0 443h0M1730.0 443h0M1742.0 443h0M2114.0 443h0M98.0 475h0M206.0 475h0M242.0 475h0M350.0 475h0M698.0 475h0M746.0 475h0M770.0 475h0M998.0 475h0M1178.0 475h0M1202.0 475h0M1274.0 475h0M1406.0 475h0M1418.0 475h0M1466.0 475h0M1502.0 475h0M1562.0 475h0M1622.0 475h0M1718.0 475h0M1730.0 475h0M1766.0 475h0M1838.0 475h0M2042.0 475h0M158.0 507h0M230.0 507h0M362.0 507h0M542.0 507h0M770.0 507h0M890.0 507h0M902.0 507h0M1058.0 507h0M1094.0 507h0M1106.0 507h0M1178.0 507h0M1370.0 507h0M1442.0 507h0M1502.0 507h0M1706.0 507h0M1742.0 507h0M1838.0 507h0M1970.0 507h0M74.0 539h0M218.0 539h0M254.0 539h0M302.0 539h0M350.0 539h0M506.0 539h0M518.0 539h0M638.0 539h0M686.0 539h0M758.0 539h0M890.0 539h0M1034.0 539h0M1118.0 539h0M1202.0 539h0M1214.0 539h0M1250.0 539h0M1346.0 539h0M1730.0 539h0M1838.0 539h0M1874.0 539h0M1982.0 539h0M230.0 571h0M446.0 571h0M578.0 571h0M614.0 571h0M914.0 571h0M1250.0 571h0M1358.0 571h0M1370.0 571h0M1574.0 571h0M2018.0 571h0M2078.0 571h0M266.0 603h0M278.0 603h0M362.0 603h0M434.0 603h0M518.0 603h0M878.0 603h0M1190.0 603h0M1250.0 603h0M1694.0 603h0M1814.0 603h0M1970.0 603h0M62.0 635h0M74.0 635h0M134.0 635h0M266.0 635h0M314.0 635h0M350.0 635h0M434.0 635h0M506.0 635h0M614.0 635h0M698.0 635h0M806.0 635h0M1406.0 635h0M1526.0 635h0M1538.0 635h0M1574.0 635h0M1682.0 635h0M1790.0 635h0M2042.0 635h0M86.0 667h0M146.0 667h0M158.0 667h0M206.0 667h0M446.0 667h0M566.0 667h0M698.0 667h0M746.0 667h0M926.0 667h0M1262.0 667h0M1286.0 667h0M1502.0 667h0M1538.0 667h0M1814.0 667h0M1838.0 667h0M1982.0 667h0M50.0 699h0M122.0 699h0M254.0 699h0M314.0 699h0M398.0 699h0M434.0 699h0M470.0 699h0M602.0 699h0M854.0 699h0M1190.0 699h0M1274.0 699h0M1382.0 699h0M1478.0 699h0M1538.0 699h0M1706.0 699h0M1910.0 699h0M1934.0 699h0M2018.0 699h0M2066.0 699h0M2114.0 699h0M62.0 731h0M326.0 731h0M422.0 731h0M434.0 731h0M458.0 731h0M590.0 731h0M746.0 731h0M794.0 731h0M1526.0 731h0M1562.0 731h0M1610.0 731h0M1646.0 731h0M1718.0 731h0M1766.0 731h0M1826.0 731h0M26.0 763h0M38.0 763h0M98.0 763h0M314.0 763h0M458.0 763h0M542.0 763h0M1250.0 763h0M1394.0 763h0M1586.0 763h0M1622.0 763h0M1706.0 763h0M1802.0 763h0M2018.0 763h0M2102.0 763h0M182.0 795h0M266.0 795h0M302.0 795h0M338.0 795h0M386.0 795h0M506.0 795h0M626.0 795h0M710.0 795h0M842.0 795h0M1034.0 795h0M1070.0 795h0M1094.0 795h0M1286.0 795h0M1394.0 795h0M1418.0 795h0M1598.0 795h0M1658.0 795h0M1862.0 795h0M1922.0 795h0M2006.0 795h0M2078.0 795h0M74.0 827h0M98.0 827h0M158.0 827h0M182.0 827h0M362.0 827h0M590.0 827h0M710.0 827h0M770.0 827h0M842.0 827h0M890.0 827h0M986.0 827h0M1034.0 827h0M1310.0 827h0M1826.0 827h0M1910.0 827h0M1934.0 827h0M2078.0 827h0M74.0 859h0M302.0 859h0M482.0 859h0M1874.0 859h0M1982.0 859h0M2078.0 859h0M338.0 891h0M2018.0 891h0M2102.0 891h0M338.0 923h0M1886.0 923h0M1958.0 923h0M2030.0 923h0M2066.0 923h0M2114.0 923h0M62.0 955h0M230.0 955h0M254.0 955h0M290.0 955h0M458.0 955h0M2006.0 955h0M2030.0 955h0M50.0 987h0M314.0 987h0M446.0 987h0M494.0 987h0M1766.0 987h0M1802.0 987h0M2030.0 987h0M2054.0 987h0M98.0 1019h0M206.0 1019h0M218.0 1019h0M254.0 1019h0M266.0 1019h0M386.0 1019h0M1766.0 1019h0M1862.0 1019h0M1874.0 1019h0M1922.0 1019h0M1946.0 1019h0M2090.0 1019h0M134.0 1051h0M146.0 1051h0M326.0 1051h0M482.0 1051h0M626.0 1051h0M938.0 1051h0M986.0 1051h0M1130.0 1051h0M1994.0 1051h0M2006.0 1051h0M2018.0 1051h0M110.0 1083h0M158.0 1083h0M242.0 1083h0M350.0 1083h0M422.0 1083h0M434.0 1083h0M734.0 1083h0M782.0 1083h0M842.0 1083h0M926.0 1083h0M986.0 1083h0M1154.0 1083h0M1946.0 1083h0M2066.0 1083h0M2102.0 1083h0M230.0 1115h0M254.0 1115h0M362.0 1115h0M602.0 1115h0M650.0 1115h0M830.0 1115h0M986.0 1115h0M1022.0 1115h0M1982.0 1115h0M2102.0 1115h0M74.0 1147h0M362.0 1147h0M410.0 1147h0M518.0 1147h0M770.0 1147h0M818.0 1147h0M830.0 1147h0M866.0 1147h0M926.0 1147h0M1058.0 1147h0M1070.0 1147h0M1094.0 1147h0M1958.0 1147h0M2054.0 1147h0M38.0 1179h0M194.0 1179h0M458.0 1179h0M482.0 1179h0M494.0 1179h0M674.0 1179h0M902.0 1179h0M986.0 1179h0M1034.0 1179h0M1058.0 1179h0M1082.0 1179h0M1142.0 1179h0M314.0 1211h0M842.0 1211h0M998.0 1211h0M1034.0 1211h0M1046.0 1211h0M50.0 1243h0M110.0 1243h0M542.0 1243h0M758.0 1243h0M770.0 1243h0M998.0 1243h0M1034.0 1243h0M1046.0 1243h0M1982.0 1243h0M62.0 1275h0M206.0 1275h0M530.0 1275h0M842.0 1275h0M866.0 1275h0M914.0 1275h0M1010.0 1275h0M1094.0 1275h0M1154.0 1275h0M1166.0 1275h0M1922.0 1275h0M98.0 1307h0M134.0 1307h0M338.0 1307h0M386.0 1307h0M734.0 1307h0M854.0 1307h0M986.0 1307h0M1994.0 1307h0M2102.0 1307h0M26.0 1339h0M62.0 1339h0M410.0 1339h0M818.0 1339h0M1058.0 1339h0M1070.0 1339h0M1946.0 1339h0M1958.0 1339h0M2018.0 1339h0M2078.0 1339h0M134.0 1371h0M506.0 1371h0M518.0 1371h0M602.0 1371h0M758.0 1371h0M770.0 1371h0M794.0 1371h0M962.0 1371h0M1034.0 1371h0M1166.0 1371h0M1922.0 1371h0M1970.0 1371h0M2102.0 1371h0M50.0 1403h0M266.0 1403h0M326.0 1403h0M446.0 1403h0M458.0 1403h0M578.0 1403h0M590.0 1403h0M1286.0 1403h0M1310.0 1403h0M1802.0 1403h0M1838.0 1403h0M1922.0 1403h0M2054.0 1403h0M170.0 1435h0M254.0 1435h0M422.0 1435h0M458.0 1435h0M470.0 1435h0M482.0 1435h0M722.0 1435h0M1022.0 1435h0M1514.0 1435h0M1622.0 1435h0M1742.0 1435h0M1766.0 1435h0M1778.0 1435h0M1982.0 1435h0M170.0 1467h0M410.0 1467h0M506.0 1467h0M914.0 1467h0M950.0 1467h0M1106.0 1467h0M1214.0 1467h0M1238.0 1467h0M1262.0 1467h0M1382.0 1467h0M1466.0 1467h0M1538.0 1467h0M1766.0 1467h0M1814.0 1467h0M1970.0 1467h0M38.0 1499h0M62.0 1499h0M326.0 1499h0M506.0 1499h0M578.0 1499h0M638.0 1499h0M686.0 1499h0M722.0 1499h0M734.0 1499h0M842.0 1499h0M866.0 1499h0M938.0 1499h0M1094.0 1499h0M1382.0 1499h0M1478.0 1499h0M1550.0 1499h0M38.0 1531h0M74.0 1531h0M110.0 1531h0M158.0 1531h0M170.0 1531h0M314.0 1531h0M938.0 1531h0M962.0 1531h0M1190.0 1531h0M1202.0 1531h0M1214.0 1531h0M1310.0 1531h0M1358.0 1531h0M1526.0 1531h0M1766.0 1531h0M1898.0 1531h0M1934.0 1531h0M1958.0 1531h0M134.0 1563h0M242.0 1563h0M446.0 1563h0M482.0 1563h0M806.0 1563h0M926.0 1563h0M950.0 1563h0M974.0 1563h0M1046.0 1563h0M1754.0 1563h0M1898.0 1563h0M2030.0 1563h0M170.0 1595h0M290.0 1595h0M302.0 1595h0M386.0 1595h0M434.0 1595h0M458.0 1595h0M770.0 1595h0M974.0 1595h0M998.0 1595h0M1118.0 1595h0M1166.0 1595h0M1346.0 1595h0M1454.0 1595h0M1610.0 1595h0M1682.0 1595h0M1718.0 1595h0M2006.0 1595h0M2042.0 1595h0M110.0 1627h0M194.0 1627h0M458.0 1627h0M566.0 1627h0M662.0 1627h0M686.0 1627h0M770.0 1627h0M818.0 1627h0M890.0 1627h0M926.0 1627h0M1070.0 1627h0M1094.0 1627h0M1166.0 1627h0M1406.0 1627h0M1466.0 1627h0M1994.0 1627h0M2006.0 1627h0M2090.0 1627h0M62.0 1659h0M290.0 1659h0M314.0 1659h0M398.0 1659h0M698.0 1659h0M1262.0 1659h0M1298.0 1659h0M1490.0 1659h0M1622.0 1659h0M1826.0 1659h0M1850.0 1659h0M2114.0 1659h0M38.0 1691h0M338.0 1691h0M470.0 1691h0M902.0 1691h0M938.0 1691h0M1022.0 1691h0M1130.0 1691h0M1142.0 1691h0M1478.0 1691h0M1622.0 1691h0M1646.0 1691h0M1706.0 1691h0M1850.0 1691h0M1970.0 1691h0M1994.0 1691h0M50.0 1723h0M218.0 1723h0M386.0 1723h0M518.0 1723h0M650.0 1723h0M758.0 1723h0M782.0 1723h0M830.0 1723h0M1058.0 1723h0M1178.0 1723h0M1190.0 1723h0M1286.0 1723h0M1334.0 1723h0M1406.0 1723h0M2030.0 1723h0M2114.0 1723h0M26.0 1755h0M38.0 1755h0M62.0 1755h0M206.0 1755h0M266.0 1755h0M458.0 1755h0M554.0 1755h0M590.0 1755h0M638.0 1755h0M734.0 1755h0M746.0 1755h0M842.0 1755h0M962.0 1755h0M1034.0 1755h0M1262.0 1755h0M1274.0 1755h0M1310.0 1755h0M1538.0 1755h0M1658.0 1755h0M1754.0 1755h0M1778.0 1755h0M1826.0 1755h0M1910.0 1755h0M1958.0 1755h0" stroke="#24264a" stroke-width="2.4" stroke-linecap="round" fill="none"/><circle cx="194.1" cy="250.4" r="2.6" fill="#9da0d6"/><circle cx="554.1" cy="314.4" r="2.6" fill="#9da0d6"/><path transform="translate(386.1 444.4)" d="M0 -5.2 Q0.7 -0.7 5.2 0 Q0.7 0.7 0 5.2 Q-0.7 0.7 -5.2 0 Q-0.7 -0.7 0 -5.2Z" fill="#ffffff"/><path transform="translate(422.1 476.4)" d="M0 -5.2 Q0.7 -0.7 5.2 0 Q0.7 0.7 0 5.2 Q-0.7 0.7 -5.2 0 Q-0.7 -0.7 0 -5.2Z" fill="#ffffff"/><path transform="translate(794.1 508.4)" d="M0 -5.0 Q1.1 -1.1 5.0 0 Q1.1 1.1 0 5.0 Q-1.1 1.1 -5.0 0 Q-1.1 -1.1 0 -5.0Z" fill="none" stroke="#b8b8d0" stroke-width="1.2"/><path transform="translate(86.1 412.4)" d="M0 -5.2 Q0.7 -0.7 5.2 0 Q0.7 0.7 0 5.2 Q-0.7 0.7 -5.2 0 Q-0.7 -0.7 0 -5.2Z" fill="#3e3d5c"/><path transform="translate(314.1 604.4)" d="M0 -5.2 Q0.7 -0.7 5.2 0 Q0.7 0.7 0 5.2 Q-0.7 0.7 -5.2 0 Q-0.7 -0.7 0 -5.2Z" fill="#3e3d5c"/><path transform="translate(614.1 604.4)" d="M0 -5.0 Q1.1 -1.1 5.0 0 Q1.1 1.1 0 5.0 Q-1.1 1.1 -5.0 0 Q-1.1 -1.1 0 -5.0Z" fill="none" stroke="#9a9ab5" stroke-width="1.2"/><path transform="translate(914.1 604.4)" d="M0 -5.0 Q1.1 -1.1 5.0 0 Q1.1 1.1 0 5.0 Q-1.1 1.1 -5.0 0 Q-1.1 -1.1 0 -5.0Z" fill="none" stroke="#9a9ab5" stroke-width="1.2"/><path transform="translate(1478.1 348.4)" d="M0 -5.0 Q1.1 -1.1 5.0 0 Q1.1 1.1 0 5.0 Q-1.1 1.1 -5.0 0 Q-1.1 -1.1 0 -5.0Z" fill="none" stroke="#9a9ab5" stroke-width="1.2"/><path transform="translate(1190.1 380.4)" d="M0 -5.2 Q0.7 -0.7 5.2 0 Q0.7 0.7 0 5.2 Q-0.7 0.7 -5.2 0 Q-0.7 -0.7 0 -5.2Z" fill="#45446a"/><circle cx="1706.1" cy="378.4" r="2.6" fill="#a3a6de"/><circle cx="1526.1" cy="442.4" r="2.6" fill="#4a4a72"/><circle cx="1922.1" cy="410.4" r="2.6" fill="#a3a6de"/><path transform="translate(1802.1 444.4)" d="M0 -5.2 Q0.7 -0.7 5.2 0 Q0.7 0.7 0 5.2 Q-0.7 0.7 -5.2 0 Q-0.7 -0.7 0 -5.2Z" fill="#45446a"/><path transform="translate(1970.1 476.4)" d="M0 -5.0 Q1.1 -1.1 5.0 0 Q1.1 1.1 0 5.0 Q-1.1 1.1 -5.0 0 Q-1.1 -1.1 0 -5.0Z" fill="none" stroke="#b8b8d0" stroke-width="1.2"/><path transform="translate(1838.1 508.4)" d="M0 -5.0 Q1.1 -1.1 5.0 0 Q1.1 1.1 0 5.0 Q-1.1 1.1 -5.0 0 Q-1.1 -1.1 0 -5.0Z" fill="none" stroke="#b8b8d0" stroke-width="1.2"/><path transform="translate(146.1 892.4)" d="M0 -5.2 Q0.7 -0.7 5.2 0 Q0.7 0.7 0 5.2 Q-0.7 0.7 -5.2 0 Q-0.7 -0.7 0 -5.2Z" fill="#6e6d88"/><path transform="translate(446.1 956.4)" d="M0 -5.0 Q1.1 -1.1 5.0 0 Q1.1 1.1 0 5.0 Q-1.1 1.1 -5.0 0 Q-1.1 -1.1 0 -5.0Z" fill="none" stroke="#3e3d5c" stroke-width="1.2"/><path transform="translate(794.1 1052.4)" d="M0 -5.2 Q0.7 -0.7 5.2 0 Q0.7 0.7 0 5.2 Q-0.7 0.7 -5.2 0 Q-0.7 -0.7 0 -5.2Z" fill="#5a5a7a"/><path transform="translate(2006.1 668.4)" d="M0 -5.2 Q0.7 -0.7 5.2 0 Q0.7 0.7 0 5.2 Q-0.7 0.7 -5.2 0 Q-0.7 -0.7 0 -5.2Z" fill="#c8c8da"/><path transform="translate(1430.1 668.4)" d="M0 -5.0 Q1.1 -1.1 5.0 0 Q1.1 1.1 0 5.0 Q-1.1 1.1 -5.0 0 Q-1.1 -1.1 0 -5.0Z" fill="none" stroke="#3a3956" stroke-width="1.2"/><path transform="translate(1238.1 796.4)" d="M0 -5.0 Q1.1 -1.1 5.0 0 Q1.1 1.1 0 5.0 Q-1.1 1.1 -5.0 0 Q-1.1 -1.1 0 -5.0Z" fill="none" stroke="#9a9ab5" stroke-width="1.2"/><path transform="translate(1934.1 892.4)" d="M0 -5.2 Q0.7 -0.7 5.2 0 Q0.7 0.7 0 5.2 Q-0.7 0.7 -5.2 0 Q-0.7 -0.7 0 -5.2Z" fill="#f0f0f8"/><circle cx="2018.1" cy="922.4" r="2.6" fill="#3a3958"/><path transform="translate(1478.1 1052.4)" d="M0 -5.2 Q0.7 -0.7 5.2 0 Q0.7 0.7 0 5.2 Q-0.7 0.7 -5.2 0 Q-0.7 -0.7 0 -5.2Z" fill="#e0e0ea"/><path transform="translate(2114.1 1084.4)" d="M0 -5.2 Q0.7 -0.7 5.2 0 Q0.7 0.7 0 5.2 Q-0.7 0.7 -5.2 0 Q-0.7 -0.7 0 -5.2Z" fill="#c0c0d0"/><path transform="translate(98.1 1372.4)" d="M0 -5.0 Q1.1 -1.1 5.0 0 Q1.1 1.1 0 5.0 Q-1.1 1.1 -5.0 0 Q-1.1 -1.1 0 -5.0Z" fill="none" stroke="#8a8aa5" stroke-width="1.2"/><path transform="translate(1166.1 1212.4)" d="M0 -5.2 Q0.7 -0.7 5.2 0 Q0.7 0.7 0 5.2 Q-0.7 0.7 -5.2 0 Q-0.7 -0.7 0 -5.2Z" fill="#45446a"/><circle cx="1850.1" cy="1242.4" r="2.6" fill="#3a3958"/><path transform="translate(1214.1 1404.4)" d="M0 -5.2 Q0.7 -0.7 5.2 0 Q0.7 0.7 0 5.2 Q-0.7 0.7 -5.2 0 Q-0.7 -0.7 0 -5.2Z" fill="#ffffff"/><path transform="translate(1442.1 1404.4)" d="M0 -5.0 Q1.1 -1.1 5.0 0 Q1.1 1.1 0 5.0 Q-1.1 1.1 -5.0 0 Q-1.1 -1.1 0 -5.0Z" fill="none" stroke="#9a9ab5" stroke-width="1.2"/><path transform="translate(2018.1 1436.4)" d="M0 -5.2 Q0.7 -0.7 5.2 0 Q0.7 0.7 0 5.2 Q-0.7 0.7 -5.2 0 Q-0.7 -0.7 0 -5.2Z" fill="#45446a"/><path transform="translate(1262.1 1628.4)" d="M0 -5.2 Q0.7 -0.7 5.2 0 Q0.7 0.7 0 5.2 Q-0.7 0.7 -5.2 0 Q-0.7 -0.7 0 -5.2Z" fill="#45446a"/><path transform="translate(1430.1 1724.4)" d="M0 -5.0 Q1.1 -1.1 5.0 0 Q1.1 1.1 0 5.0 Q-1.1 1.1 -5.0 0 Q-1.1 -1.1 0 -5.0Z" fill="none" stroke="#3a3956" stroke-width="1.2"/><path transform="translate(1370.1 1756.4)" d="M0 -5.0 Q1.1 -1.1 5.0 0 Q1.1 1.1 0 5.0 Q-1.1 1.1 -5.0 0 Q-1.1 -1.1 0 -5.0Z" fill="none" stroke="#8a8aa5" stroke-width="1.2"/>
</svg>
<span class="t" style="left:20.8px;top:109px;color:#569ef5;">worktree graph [?]  layered  bg:stars</span><span class="t" style="left:1616.8px;top:141px;color:#e9e5f1;">tok/s leaderboard</span><span class="t" style="left:1628.8px;top:173px;color:#e9e5f1;">tokencalculation</span><span class="t" style="left:1844.8px;top:173px;color:#e9e5f1;">6.26k/s</span><span class="t" style="left:1952.8px;top:173px;color:#b9a8ee;">1.00x</span><span class="t" style="left:1628.8px;top:205px;color:#569ef5;font-weight:bold;">performance</span><span class="t" style="left:1844.8px;top:205px;color:#569ef5;font-weight:bold;">5.34k/s</span><span class="t" style="left:1952.8px;top:205px;color:#b9a8ee;">0.85x</span><span class="t" style="left:1628.8px;top:237px;color:#e9e5f1;">UI</span><span class="t" style="left:1844.8px;top:237px;color:#e9e5f1;">2.77k/s</span><span class="t" style="left:1952.8px;top:237px;color:#b9a8ee;">0.44x</span><span class="t" style="left:1628.8px;top:269px;color:#e9e5f1;">idle x4</span><span class="t" style="left:1892.8px;top:269px;color:#e9e5f1;">0/s</span><span class="t" style="left:1064.8px;top:589px;color:#f6d2a0;">0</span><span class="t" style="left:980.8px;top:653px;color:#f6d2a0;font-weight:bold;">dev idle(648s)</span><span class="t" style="left:980.8px;top:685px;color:#a47a4c;">local only</span><span class="t" style="left:548.8px;top:877px;color:#e0675b;">o</span><span class="t" style="left:896.8px;top:877px;color:#e0675b;">o</span><span class="t" style="left:1232.8px;top:877px;color:#569ef5;">o</span><span class="t" style="left:1580.8px;top:877px;color:#f6d2a0;">o</span><span class="t" style="left:524.8px;top:941px;color:#e0675b;">UI*</span><span class="t" style="left:524.8px;top:973px;color:#8d4b4b;">dirty</span><span class="t" style="left:776.8px;top:941px;color:#e0675b;">branching* idle(438s)</span><span class="t" style="left:776.8px;top:973px;color:#8d4b4b;">dirty</span><span class="t" style="left:1124.8px;top:941px;color:#e9e5f1;">bugs idle(168s)</span><span class="t" style="left:1124.8px;top:973px;color:#5e9370;">merged with parent</span><span class="t" style="left:1472.8px;top:941px;color:#e9e5f1;">research idle(372s)</span><span class="t" style="left:1472.8px;top:973px;color:#5e9370;">merged with parent</span><span class="t" style="left:1304.8px;top:1229px;color:#e0675b;">o</span><span class="t" style="left:1196.8px;top:1293px;color:#e0675b;">tokencalculation*</span><span class="t" style="left:1196.8px;top:1325px;color:#8d4b4b;">dirty</span><span class="t" style="left:1772.8px;top:1229px;color:#569ef5;">@</span><span class="t" style="left:1664.8px;top:1293px;color:#569ef5;font-weight:bold;">performance</span><span class="t" style="left:1664.8px;top:1325px;color:#5e9370;">merged with parent</span><span class="t" style="left:2156.8px;top:109px;color:#c3b5f2;">art</span><span class="t" style="left:2156.8px;top:493px;color:#c3b5f2;">details [?]</span><span class="t" style="left:2156.8px;top:1165px;color:#c3b5f2;">actions [?]</span><span class="t" style="left:2156.8px;top:525px;color:#c3b5f2;">branch:</span><span class="t" style="left:2252.8px;top:525px;color:#569ef5;">performance</span><span class="t" style="left:2156.8px;top:557px;color:#c3b5f2;">path:</span><span class="t" style="left:2252.8px;top:557px;color:#e9e5f1;">/Users/matar/fafo/.OpenSwarm-workspaces/performance</span><span class="t" style="left:2156.8px;top:589px;color:#c3b5f2;">head:</span><span class="t" style="left:2252.8px;top:589px;color:#f0d49a;">a35a912044b9161bdcfc68177da7dba638b52575</span><span class="t" style="left:2156.8px;top:621px;color:#c3b5f2;">source:</span><span class="t" style="left:2252.8px;top:621px;color:#e3a466;">research</span><span class="t" style="left:2156.8px;top:685px;color:#c3b5f2;">dirty:</span><span class="t" style="left:2252.8px;top:685px;color:#6fcf8f;">no</span><span class="t" style="left:2312.8px;top:685px;color:#c3b5f2;">locked:</span><span class="t" style="left:2408.8px;top:685px;color:#6fcf8f;">no</span><span class="t" style="left:2156.8px;top:717px;color:#c3b5f2;">ahead:</span><span class="t" style="left:2252.8px;top:717px;color:#6fcf8f;">0</span><span class="t" style="left:2300.8px;top:717px;color:#c3b5f2;">behind:</span><span class="t" style="left:2396.8px;top:717px;color:#f0d49a;">0</span><span class="t" style="left:2156.8px;top:749px;color:#c3b5f2;">parent:</span><span class="t" style="left:2252.8px;top:749px;color:#6fcf8f;">in sync</span><span class="t" style="left:2156.8px;top:781px;color:#c3b5f2;">flags:</span><span class="t" style="left:2252.8px;top:781px;color:#e3a466;">none</span><span class="t" style="left:2156.8px;top:813px;color:#c3b5f2;">pty:</span><span class="t" style="left:2252.8px;top:813px;color:#569ef5;">7 live</span><span class="t" style="left:2348.8px;top:813px;color:#c3b5f2;">active</span><span class="t" style="left:2432.8px;top:813px;color:#6fcf8f;">3</span><span class="t" style="left:2468.8px;top:813px;color:#c3b5f2;">idle</span><span class="t" style="left:2528.8px;top:813px;color:#f0d49a;">4</span><span class="t" style="left:2156.8px;top:845px;color:#c3b5f2;">tokens~:</span><span class="t" style="left:2252.8px;top:845px;color:#f0d49a;">in 103 (0/s)</span><span class="t" style="left:2420.8px;top:845px;color:#6fcf8f;">out</span><span class="t" style="left:2468.8px;top:845px;color:#6fcf8f;">1.04k (5.34k/s)</span><span class="t" style="left:2672.8px;top:845px;color:#569ef5;">total</span><span class="t" style="left:2744.8px;top:845px;color:#569ef5;">1.14k</span><span class="t" style="left:2156.8px;top:909px;color:#c3b5f2;">status:</span><span class="t" style="left:2156.8px;top:941px;color:#e9e5f1;">Worktree art mode: config art (M to toggle)</span><span class="t" style="left:2156.8px;top:1197px;color:#f0d49a;">w</span><span class="t" style="left:2180.8px;top:1197px;color:#e9e5f1;">file changes view</span><span class="t" style="left:2156.8px;top:1229px;color:#569ef5;">r</span><span class="t" style="left:2180.8px;top:1229px;color:#e9e5f1;">refresh worktrees</span><span class="t" style="left:2156.8px;top:1261px;color:#e0675b;">q</span><span class="t" style="left:2180.8px;top:1261px;color:#e9e5f1;">quit</span><span class="t" style="left:2156.8px;top:1325px;color:#6fcf8f;">a</span><span class="t" style="left:2180.8px;top:1325px;color:#e9e5f1;">create worktree</span><span class="t" style="left:2156.8px;top:1357px;color:#6fcf8f;">g</span><span class="t" style="left:2180.8px;top:1357px;color:#e9e5f1;">orchestrate worktrees from feature requirement</span><span class="t" style="left:2156.8px;top:1389px;color:#f0d49a;">o</span><span class="t" style="left:2180.8px;top:1389px;color:#e9e5f1;">open terminal popup</span><span class="t" style="left:2156.8px;top:1421px;color:#f0d49a;">O</span><span class="t" style="left:2180.8px;top:1421px;color:#e9e5f1;">open agent picker</span><span class="t" style="left:2156.8px;top:1453px;color:#569ef5;">f</span><span class="t" style="left:2180.8px;top:1453px;color:#e9e5f1;">fetch + pull parent (or selected dev head)</span><span class="t" style="left:2156.8px;top:1485px;color:#569ef5;">F</span><span class="t" style="left:2180.8px;top:1485px;color:#e9e5f1;">rebase selected onto parent</span><span class="t" style="left:2156.8px;top:1517px;color:#e3a466;">c</span><span class="t" style="left:2180.8px;top:1517px;color:#e9e5f1;">add+commit</span><span class="t" style="left:2156.8px;top:1549px;color:#e3a466;">p</span><span class="t" style="left:2180.8px;top:1549px;color:#e9e5f1;">push</span><span class="t" style="left:2156.8px;top:1581px;color:#e0675b;">d</span><span class="t" style="left:2180.8px;top:1581px;color:#e9e5f1;">delete selected (prompts if dirty)</span><span class="t" style="left:2156.8px;top:1613px;color:#6fcf8f;">m</span><span class="t" style="left:2180.8px;top:1613px;color:#e9e5f1;">merge to parent</span><span class="t" style="left:2156.8px;top:1645px;color:#569ef5;">n</span><span class="t" style="left:2180.8px;top:1645px;color:#e9e5f1;">notes (vim-style)</span><span class="t" style="left:2156.8px;top:1677px;color:#f0d49a;">x</span><span class="t" style="left:2180.8px;top:1677px;color:#e9e5f1;">prune stale</span><span class="t" style="left:2156.8px;top:1709px;color:#569ef5;">L</span><span class="t" style="left:2180.8px;top:1709px;color:#e9e5f1;">git command history popup</span>
</body></html>
